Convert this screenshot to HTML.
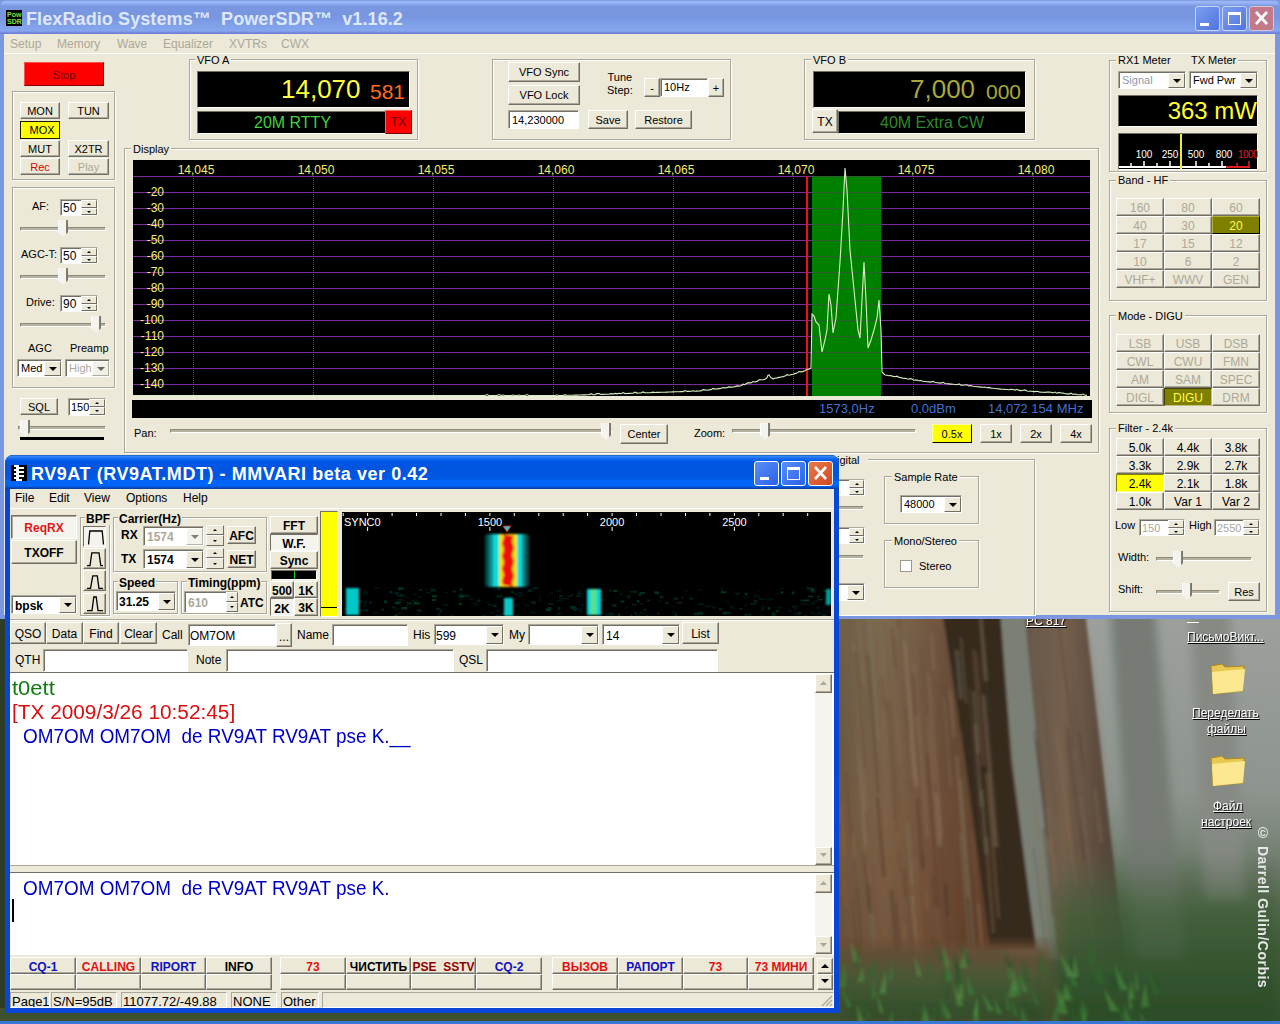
<!DOCTYPE html>
<html><head><meta charset="utf-8">
<style>
*{box-sizing:border-box;margin:0;padding:0}
html,body{width:1280px;height:1024px;overflow:hidden}
body{position:relative;font-family:"Liberation Sans",sans-serif;font-size:12px;color:#000;background:#5a5a48}
.a{position:absolute}
.t{position:absolute;white-space:nowrap;line-height:1}
.btn{position:absolute;background:#ECE9D8;border:1px solid;border-color:#fff #716F64 #716F64 #fff;box-shadow:inset -1px -1px 0 #ACA899;text-align:center;white-space:nowrap;line-height:1}
.grp{position:absolute;border:1px solid #ACA899;box-shadow:inset 1px 1px 0 #fff,1px 1px 0 #fff}
.gl{position:absolute;background:#ECE9D8;padding:0 2px;white-space:nowrap;line-height:1}
.tb{position:absolute;background:#fff;border:1px solid;border-color:#ACA899 #fff #fff #ACA899;box-shadow:inset 1px 1px 0 #716F64;white-space:nowrap;line-height:1;overflow:hidden}
.blk{position:absolute;background:#000}
.dd{position:absolute;background:#ECE9D8;border:1px solid;border-color:#fff #716F64 #716F64 #fff}
.dd:after{content:"";position:absolute;left:50%;top:50%;margin-left:-4px;margin-top:-2px;border-left:4px solid transparent;border-right:4px solid transparent;border-top:4px solid #000}
.sp{position:absolute;background:#ECE9D8;border:1px solid;border-color:#fff #716F64 #716F64 #fff}
.sp:after{content:"";position:absolute;left:50%;top:50%;margin-left:-2px;margin-top:-1px;border-left:2px solid transparent;border-right:2px solid transparent;border-bottom:2px solid #000}
.sp.d:after{border-bottom:0;border-top:2px solid #000}
.sld{position:absolute;height:4px;border:1px solid;border-color:#8f8c7c #fff #fff #8f8c7c;background:#b5b2a2}
.thumb{position:absolute;width:10px;height:17px;background:linear-gradient(90deg,#fff 0,#fff 1px,#f4f3ee 1px,#f4f3ee 8px,#8a8778 8px,#716F64 10px);clip-path:polygon(0 0,100% 0,100% 72%,50% 100%,0 72%)}
</style></head><body>

<!-- desktop background -->
<div id="desk" class="a" style="left:0;top:0;width:1280px;height:1024px;background:#808478">
<svg class="a" style="left:0;top:0" width="1280" height="1024">
<defs>
<filter id="fb" x="-10%" y="-10%" width="120%" height="120%"><feGaussianBlur stdDeviation="8"/></filter>
<filter id="fb2" x="-10%" y="-10%" width="120%" height="120%"><feGaussianBlur stdDeviation="5"/></filter>
<filter id="fb3" x="-10%" y="-10%" width="120%" height="120%"><feGaussianBlur stdDeviation="1.5"/></filter>
<linearGradient id="fog" x1="0" y1="0" x2="0" y2="1"><stop offset="0" stop-color="#9ea29e"/><stop offset="0.45" stop-color="#8e948e"/><stop offset="0.6" stop-color="#768274"/><stop offset="0.8" stop-color="#4a6044"/><stop offset="1" stop-color="#34502e"/></linearGradient>
<linearGradient id="tr1" x1="0" y1="0" x2="1" y2="0"><stop offset="0" stop-color="#6e5e48"/><stop offset="0.25" stop-color="#7e6a50"/><stop offset="0.5" stop-color="#725640"/><stop offset="0.7" stop-color="#604632"/><stop offset="1" stop-color="#46382a"/></linearGradient>
<linearGradient id="tr1v" x1="0" y1="0" x2="0" y2="1"><stop offset="0" stop-color="#000" stop-opacity="0"/><stop offset="0.6" stop-color="#6a2a10" stop-opacity="0.15"/><stop offset="1" stop-color="#5a2a10" stop-opacity="0.3"/></linearGradient>
<linearGradient id="tr2" x1="0" y1="0" x2="1" y2="0"><stop offset="0" stop-color="#66584a"/><stop offset="0.4" stop-color="#745e4c"/><stop offset="1" stop-color="#4a3e34"/></linearGradient>
<linearGradient id="veg" x1="0" y1="0" x2="0" y2="1"><stop offset="0" stop-color="#50604a" stop-opacity="0"/><stop offset="0.35" stop-color="#3e5e36" stop-opacity="0.75"/><stop offset="1" stop-color="#2a4a26"/></linearGradient>
</defs>
<rect x="0" y="600" width="1280" height="424" fill="url(#fog)"/>
<g filter="url(#fb2)">
<path d="M1110 610 L1155 610 L1185 960 L1135 960Z" fill="#767c74"/>
<path d="M1190 610 L1230 610 L1245 900 L1205 900Z" fill="#868a84"/>
</g>
<g filter="url(#fb3)">
<path d="M990 610 L1035 610 L1065 960 L1000 960Z" fill="#7a8076"/>
<path d="M1024 610 L1085 610 L1125 960 L1058 960Z" fill="url(#tr2)"/>
<path d="M835 610 L1000 610 L1012 760 L1036 950 L835 950Z" fill="url(#tr1)"/>
<path d="M835 610 L1000 610 L1012 760 L1036 950 L835 950Z" fill="url(#tr1v)"/>
<path d="M942 610 L1000 610 L1010 760 L1036 945 L990 945 L965 760Z" fill="#34291f"/>
<path d="M904 897 L907 897 L916 1006 L913 1006Z" fill="#7a7a5e" opacity="0.4"/><path d="M964 860 L965 860 L974 971 L973 971Z" fill="#4a3226" opacity="0.4"/><path d="M852 643 L854 643 L867 810 L865 810Z" fill="#9a8468" opacity="0.4"/><path d="M926 753 L928 753 L940 909 L938 909Z" fill="#4a3226" opacity="0.4"/><path d="M930 634 L933 634 L936 670 L932 670Z" fill="#8a7458" opacity="0.4"/><path d="M926 715 L929 715 L940 845 L937 845Z" fill="#8a7458" opacity="0.4"/><path d="M914 767 L917 767 L929 910 L926 910Z" fill="#8a6a48" opacity="0.4"/><path d="M934 783 L936 783 L952 972 L949 972Z" fill="#5a4030" opacity="0.4"/><path d="M942 685 L944 685 L950 764 L948 764Z" fill="#5a4030" opacity="0.4"/><path d="M921 648 L922 648 L928 727 L927 727Z" fill="#5a4030" opacity="0.4"/><path d="M979 615 L982 615 L988 681 L984 681Z" fill="#9a8468" opacity="0.4"/><path d="M907 736 L911 736 L914 779 L910 779Z" fill="#8a7458" opacity="0.4"/><path d="M952 642 L954 642 L961 728 L959 728Z" fill="#3e3024" opacity="0.4"/><path d="M949 690 L951 690 L955 737 L953 737Z" fill="#9a8468" opacity="0.4"/><path d="M906 823 L909 823 L914 885 L911 885Z" fill="#7a7a5e" opacity="0.4"/><path d="M866 655 L869 655 L880 794 L877 794Z" fill="#5a4030" opacity="0.4"/><path d="M896 615 L900 615 L914 792 L910 792Z" fill="#6a4a34" opacity="0.4"/><path d="M985 672 L986 672 L1002 871 L1001 871Z" fill="#5a4030" opacity="0.4"/><path d="M844 750 L846 750 L848 781 L847 781Z" fill="#7a5440" opacity="0.4"/><path d="M960 638 L962 638 L967 703 L965 703Z" fill="#8a7458" opacity="0.4"/><path d="M840 805 L842 805 L847 856 L844 856Z" fill="#8a6a48" opacity="0.4"/><path d="M960 733 L962 733 L973 869 L971 869Z" fill="#6a4a34" opacity="0.4"/><path d="M972 691 L975 691 L980 753 L977 753Z" fill="#7a7a5e" opacity="0.4"/><path d="M867 884 L871 884 L881 1017 L878 1017Z" fill="#3e3024" opacity="0.4"/><path d="M845 771 L846 771 L852 845 L851 845Z" fill="#3e3024" opacity="0.4"/><path d="M876 797 L879 797 L886 877 L882 877Z" fill="#4a3226" opacity="0.4"/><path d="M975 654 L979 654 L987 765 L984 765Z" fill="#5a4030" opacity="0.4"/><path d="M879 677 L883 677 L886 710 L882 710Z" fill="#6a4a34" opacity="0.4"/><path d="M898 629 L900 629 L906 707 L905 707Z" fill="#7a7a5e" opacity="0.4"/><path d="M922 725 L924 725 L938 907 L937 907Z" fill="#7a5440" opacity="0.4"/><path d="M935 793 L938 793 L942 847 L939 847Z" fill="#9a8468" opacity="0.4"/><path d="M974 724 L976 724 L983 807 L980 807Z" fill="#9a8468" opacity="0.4"/><path d="M841 762 L844 762 L856 916 L853 916Z" fill="#7a5440" opacity="0.4"/><path d="M858 753 L859 753 L867 846 L865 846Z" fill="#9a8468" opacity="0.4"/><path d="M970 830 L974 830 L987 994 L984 994Z" fill="#7a5440" opacity="0.4"/><path d="M890 890 L893 890 L907 1068 L904 1068Z" fill="#3e3024" opacity="0.4"/><path d="M977 767 L978 767 L980 800 L979 800Z" fill="#3e3024" opacity="0.4"/><path d="M894 637 L895 637 L898 682 L897 682Z" fill="#5a4030" opacity="0.4"/><path d="M984 837 L988 837 L995 933 L992 933Z" fill="#8a6a48" opacity="0.4"/><path d="M903 641 L906 641 L919 798 L915 798Z" fill="#9a8468" opacity="0.4"/><path d="M884 622 L885 622 L900 815 L899 815Z" fill="#5a4030" opacity="0.4"/><path d="M911 896 L914 896 L920 969 L917 969Z" fill="#9a8468" opacity="0.4"/><path d="M892 802 L894 802 L903 920 L902 920Z" fill="#7a5440" opacity="0.4"/><path d="M935 887 L937 887 L944 973 L942 973Z" fill="#6a4a34" opacity="0.4"/><path d="M867 861 L869 861 L884 1046 L882 1046Z" fill="#8a7458" opacity="0.4"/><path d="M895 712 L897 712 L902 765 L899 765Z" fill="#8a6a48" opacity="0.4"/><path d="M890 627 L893 627 L897 668 L893 668Z" fill="#6a4a34" opacity="0.4"/><path d="M959 759 L960 759 L975 946 L974 946Z" fill="#3e3024" opacity="0.4"/><path d="M894 820 L897 820 L909 972 L906 972Z" fill="#8a6a48" opacity="0.4"/><path d="M885 700 L889 700 L899 833 L896 833Z" fill="#6a4a34" opacity="0.4"/><path d="M922 856 L924 856 L926 890 L925 890Z" fill="#4a3226" opacity="0.4"/><path d="M898 850 L899 850 L905 925 L904 925Z" fill="#4a3226" opacity="0.4"/><path d="M955 650 L959 650 L963 699 L959 699Z" fill="#7a7a5e" opacity="0.4"/><path d="M934 907 L938 907 L949 1054 L946 1054Z" fill="#8a7458" opacity="0.4"/><path d="M959 833 L961 833 L974 991 L972 991Z" fill="#7a7a5e" opacity="0.4"/><path d="M943 698 L945 698 L952 787 L950 787Z" fill="#7a7a5e" opacity="0.4"/><path d="M912 664 L916 664 L929 838 L926 838Z" fill="#8a7458" opacity="0.4"/><path d="M851 835 L855 835 L859 887 L855 887Z" fill="#8a6a48" opacity="0.4"/><path d="M867 617 L871 617 L880 741 L877 741Z" fill="#7a7a5e" opacity="0.4"/><path d="M955 756 L959 756 L970 897 L966 897Z" fill="#8a7458" opacity="0.4"/><path d="M853 858 L856 858 L871 1046 L868 1046Z" fill="#5a4030" opacity="0.4"/><path d="M869 914 L873 914 L889 1110 L885 1110Z" fill="#7a7a5e" opacity="0.4"/><path d="M982 695 L985 695 L998 847 L994 847Z" fill="#9a8468" opacity="0.4"/><path d="M889 749 L890 749 L900 873 L899 873Z" fill="#6a4a34" opacity="0.4"/><path d="M910 862 L911 862 L914 903 L913 903Z" fill="#9a8468" opacity="0.4"/><path d="M863 855 L865 855 L870 909 L868 909Z" fill="#4a3226" opacity="0.4"/><path d="M985 773 L989 773 L1000 918 L997 918Z" fill="#8a6a48" opacity="0.4"/><path d="M977 904 L980 904 L983 949 L981 949Z" fill="#8a7458" opacity="0.4"/><path d="M903 869 L905 869 L915 994 L913 994Z" fill="#4a3226" opacity="0.4"/><path d="M915 786 L918 786 L925 869 L921 869Z" fill="#3e3024" opacity="0.4"/><path d="M978 801 L982 801 L989 883 L985 883Z" fill="#4a3226" opacity="0.4"/><path d="M980 790 L983 790 L988 854 L985 854Z" fill="#7a7a5e" opacity="0.4"/><path d="M855 730 L856 730 L866 852 L865 852Z" fill="#9a8468" opacity="0.4"/><path d="M914 859 L916 859 L926 985 L924 985Z" fill="#8a6a48" opacity="0.4"/><path d="M852 899 L853 899 L862 1007 L860 1007Z" fill="#3e3024" opacity="0.4"/><path d="M878 654 L880 654 L888 757 L886 757Z" fill="#8a6a48" opacity="0.4"/><path d="M915 743 L916 743 L919 778 L918 778Z" fill="#6a4a34" opacity="0.4"/><path d="M857 622 L860 622 L865 685 L862 685Z" fill="#8a7458" opacity="0.4"/><path d="M840 836 L842 836 L847 907 L845 907Z" fill="#8a6a48" opacity="0.4"/><path d="M853 652 L857 652 L866 769 L863 769Z" fill="#6a4a34" opacity="0.4"/><path d="M944 883 L947 883 L949 917 L946 917Z" fill="#3e3024" opacity="0.4"/><path d="M959 779 L962 779 L976 956 L973 956Z" fill="#7a7a5e" opacity="0.4"/><path d="M932 875 L934 875 L945 1009 L943 1009Z" fill="#4a3226" opacity="0.4"/><path d="M872 862 L875 862 L890 1046 L887 1046Z" fill="#7a5440" opacity="0.4"/><path d="M927 674 L930 674 L943 837 L940 837Z" fill="#8a7458" opacity="0.4"/><path d="M968 688 L970 688 L982 842 L981 842Z" fill="#6a4a34" opacity="0.4"/><path d="M895 902 L897 902 L907 1024 L905 1024Z" fill="#4a3226" opacity="0.4"/><path d="M867 859 L870 859 L874 905 L871 905Z" fill="#7a5440" opacity="0.4"/><path d="M972 650 L976 650 L985 766 L981 766Z" fill="#7a5440" opacity="0.4"/><path d="M912 673 L915 673 L918 715 L915 715Z" fill="#5a4030" opacity="0.4"/><path d="M1032 792 L1034 792 L1052 940 L1049 940Z" fill="#8a6e52" opacity="0.4"/><path d="M1040 677 L1041 677 L1058 818 L1056 818Z" fill="#5e4a3c" opacity="0.4"/><path d="M1090 637 L1091 637 L1110 792 L1109 792Z" fill="#8a6e52" opacity="0.4"/><path d="M1035 729 L1036 729 L1047 821 L1046 821Z" fill="#5e4a3c" opacity="0.4"/><path d="M1058 624 L1060 624 L1075 748 L1073 748Z" fill="#4a3a2e" opacity="0.4"/><path d="M1042 827 L1044 827 L1054 916 L1052 916Z" fill="#4a3a2e" opacity="0.4"/><path d="M1069 842 L1071 842 L1080 921 L1079 921Z" fill="#7a5e48" opacity="0.4"/><path d="M1082 861 L1085 861 L1098 977 L1096 977Z" fill="#8a6e52" opacity="0.4"/><path d="M1067 784 L1068 784 L1078 865 L1077 865Z" fill="#5e4a3c" opacity="0.4"/><path d="M1048 828 L1049 828 L1057 887 L1055 887Z" fill="#8a6e52" opacity="0.4"/><path d="M1039 771 L1040 771 L1050 855 L1049 855Z" fill="#8a6e52" opacity="0.4"/><path d="M1080 822 L1082 822 L1087 871 L1086 871Z" fill="#5e4a3c" opacity="0.4"/><path d="M1050 869 L1051 869 L1070 1028 L1069 1028Z" fill="#7a5e48" opacity="0.4"/><path d="M1045 807 L1048 807 L1058 887 L1055 887Z" fill="#8a6e52" opacity="0.4"/><path d="M1067 729 L1069 729 L1088 889 L1086 889Z" fill="#4a3a2e" opacity="0.4"/><path d="M1076 894 L1078 894 L1083 937 L1081 937Z" fill="#7a5e48" opacity="0.4"/><path d="M1078 732 L1080 732 L1085 778 L1084 778Z" fill="#4a3a2e" opacity="0.4"/><path d="M1072 692 L1073 692 L1082 765 L1081 765Z" fill="#5e4a3c" opacity="0.4"/><path d="M1066 891 L1068 891 L1081 999 L1079 999Z" fill="#7a5e48" opacity="0.4"/><path d="M1071 641 L1074 641 L1087 753 L1085 753Z" fill="#7a5e48" opacity="0.4"/><path d="M1055 728 L1058 728 L1077 884 L1074 884Z" fill="#8a6e52" opacity="0.4"/><path d="M1065 740 L1067 740 L1079 840 L1077 840Z" fill="#5e4a3c" opacity="0.4"/><path d="M1064 722 L1066 722 L1075 797 L1073 797Z" fill="#5e4a3c" opacity="0.4"/><path d="M1066 821 L1068 821 L1077 896 L1076 896Z" fill="#7a5e48" opacity="0.4"/><path d="M1080 797 L1082 797 L1093 886 L1091 886Z" fill="#8a6e52" opacity="0.4"/><path d="M1033 731 L1035 731 L1048 841 L1047 841Z" fill="#5e4a3c" opacity="0.4"/><path d="M1035 740 L1038 740 L1049 838 L1046 838Z" fill="#4a3a2e" opacity="0.4"/><path d="M1033 847 L1034 847 L1052 996 L1051 996Z" fill="#4a3a2e" opacity="0.4"/><path d="M1094 789 L1096 789 L1103 843 L1100 843Z" fill="#8a6e52" opacity="0.4"/><path d="M1060 635 L1061 635 L1073 738 L1072 738Z" fill="#7a5e48" opacity="0.4"/>
</g>
<path d="M835 945 L1050 945 L1070 1024 L835 1024Z" fill="#6a4a32" filter="url(#fb)"/>
<rect x="835" y="948" width="220" height="76" fill="url(#veg)" filter="url(#fb)"/>
<rect x="1055" y="850" width="225" height="174" fill="url(#veg)" filter="url(#fb)"/>
<g filter="url(#fb3)"><path d="M955 970 L954 951 L961 970Z" fill="#1e4a1e" opacity="0.5"/><path d="M973 1015 L978 998 L978 1015Z" fill="#5aa048" opacity="0.5"/><path d="M879 994 L886 970 L886 994Z" fill="#5aa048" opacity="0.5"/><path d="M954 979 L957 956 L958 979Z" fill="#2e5a2a" opacity="0.5"/><path d="M928 977 L928 954 L932 977Z" fill="#2a6a2a" opacity="0.5"/><path d="M1058 1005 L1054 984 L1065 1005Z" fill="#3a8a3a" opacity="0.5"/><path d="M871 998 L875 973 L875 998Z" fill="#3a8a3a" opacity="0.5"/><path d="M914 1030 L913 1012 L919 1030Z" fill="#1e4a1e" opacity="0.5"/><path d="M1078 1020 L1083 999 L1086 1020Z" fill="#3a8a3a" opacity="0.5"/><path d="M1108 1015 L1107 996 L1116 1015Z" fill="#1e4a1e" opacity="0.5"/><path d="M957 1006 L954 985 L964 1006Z" fill="#5aa048" opacity="0.5"/><path d="M1135 990 L1136 970 L1139 990Z" fill="#4a9a40" opacity="0.5"/><path d="M1013 991 L1013 968 L1018 991Z" fill="#5aa048" opacity="0.5"/><path d="M1088 965 L1094 943 L1095 965Z" fill="#2a6a2a" opacity="0.5"/><path d="M997 1014 L994 997 L1002 1014Z" fill="#4a9a40" opacity="0.5"/><path d="M1072 986 L1069 966 L1078 986Z" fill="#3a8a3a" opacity="0.5"/><path d="M1129 1009 L1128 985 L1133 1009Z" fill="#4a9a40" opacity="0.5"/><path d="M940 988 L947 970 L945 988Z" fill="#2e5a2a" opacity="0.5"/><path d="M956 986 L957 962 L963 986Z" fill="#1e4a1e" opacity="0.5"/><path d="M957 988 L962 966 L961 988Z" fill="#2a6a2a" opacity="0.5"/><path d="M1082 1023 L1087 1004 L1086 1023Z" fill="#4a9a40" opacity="0.5"/><path d="M889 981 L892 957 L892 981Z" fill="#3a8a3a" opacity="0.5"/><path d="M1014 1016 L1011 997 L1018 1016Z" fill="#3a8a3a" opacity="0.5"/><path d="M939 962 L933 938 L946 962Z" fill="#2e5a2a" opacity="0.5"/><path d="M917 976 L914 955 L922 976Z" fill="#5aa048" opacity="0.5"/><path d="M1098 984 L1098 962 L1105 984Z" fill="#2a6a2a" opacity="0.5"/><path d="M1066 1025 L1070 999 L1071 1025Z" fill="#1e4a1e" opacity="0.5"/><path d="M839 987 L845 961 L846 987Z" fill="#3a8a3a" opacity="0.5"/><path d="M1007 1010 L1005 990 L1011 1010Z" fill="#3a8a3a" opacity="0.5"/><path d="M1077 1030 L1080 1011 L1082 1030Z" fill="#1e4a1e" opacity="0.5"/><path d="M1008 979 L1008 956 L1013 979Z" fill="#3a8a3a" opacity="0.5"/><path d="M888 1025 L892 1009 L894 1025Z" fill="#3a8a3a" opacity="0.5"/><path d="M1096 982 L1091 964 L1100 982Z" fill="#2a6a2a" opacity="0.5"/><path d="M1069 1002 L1068 977 L1074 1002Z" fill="#2a6a2a" opacity="0.5"/><path d="M1131 1027 L1132 1002 L1137 1027Z" fill="#2e5a2a" opacity="0.5"/><path d="M922 1023 L924 999 L925 1023Z" fill="#4a9a40" opacity="0.5"/><path d="M1116 988 L1123 964 L1121 988Z" fill="#2a6a2a" opacity="0.5"/><path d="M1008 997 L1012 980 L1016 997Z" fill="#4a9a40" opacity="0.5"/><path d="M1125 1022 L1124 1004 L1131 1022Z" fill="#4a9a40" opacity="0.5"/><path d="M1120 990 L1114 964 L1128 990Z" fill="#4a9a40" opacity="0.5"/><path d="M880 1013 L876 991 L884 1013Z" fill="#5aa048" opacity="0.5"/><path d="M1086 960 L1091 943 L1091 960Z" fill="#2a6a2a" opacity="0.5"/><path d="M1069 967 L1072 950 L1076 967Z" fill="#1e4a1e" opacity="0.5"/><path d="M1013 996 L1018 976 L1021 996Z" fill="#3a8a3a" opacity="0.5"/><path d="M867 1019 L860 999 L873 1019Z" fill="#2a6a2a" opacity="0.5"/><path d="M1143 1028 L1140 1012 L1148 1028Z" fill="#4a9a40" opacity="0.5"/><path d="M988 1011 L982 993 L995 1011Z" fill="#4a9a40" opacity="0.5"/><path d="M1056 1013 L1058 997 L1061 1013Z" fill="#3a8a3a" opacity="0.5"/><path d="M1067 977 L1060 953 L1075 977Z" fill="#5aa048" opacity="0.5"/><path d="M1110 1011 L1104 989 L1119 1011Z" fill="#5aa048" opacity="0.5"/><path d="M1079 1028 L1080 1011 L1084 1028Z" fill="#1e4a1e" opacity="0.5"/><path d="M959 968 L966 946 L967 968Z" fill="#4a9a40" opacity="0.5"/><path d="M945 1019 L938 996 L949 1019Z" fill="#3a8a3a" opacity="0.5"/><path d="M1041 973 L1039 948 L1048 973Z" fill="#2a6a2a" opacity="0.5"/><path d="M867 976 L875 956 L875 976Z" fill="#2a6a2a" opacity="0.5"/><path d="M948 1018 L942 1000 L952 1018Z" fill="#5aa048" opacity="0.5"/><path d="M1061 994 L1063 971 L1067 994Z" fill="#1e4a1e" opacity="0.5"/><path d="M940 1016 L943 994 L943 1016Z" fill="#2a6a2a" opacity="0.5"/><path d="M945 984 L944 963 L949 984Z" fill="#2e5a2a" opacity="0.5"/><path d="M945 981 L947 963 L953 981Z" fill="#3a8a3a" opacity="0.5"/><path d="M1129 999 L1131 978 L1135 999Z" fill="#4a9a40" opacity="0.5"/><path d="M902 1026 L905 1001 L908 1026Z" fill="#2e5a2a" opacity="0.5"/><path d="M847 1007 L841 986 L852 1007Z" fill="#3a8a3a" opacity="0.5"/><path d="M945 967 L942 942 L951 967Z" fill="#4a9a40" opacity="0.5"/><path d="M1073 977 L1074 955 L1079 977Z" fill="#5aa048" opacity="0.5"/><path d="M923 1025 L925 1007 L931 1025Z" fill="#4a9a40" opacity="0.5"/><path d="M931 1024 L935 1004 L935 1024Z" fill="#2a6a2a" opacity="0.5"/><path d="M1030 1018 L1023 1000 L1039 1018Z" fill="#1e4a1e" opacity="0.5"/><path d="M1141 1007 L1145 982 L1149 1007Z" fill="#4a9a40" opacity="0.5"/><path d="M1036 1005 L1031 985 L1039 1005Z" fill="#3a8a3a" opacity="0.5"/><path d="M1008 968 L1003 947 L1013 968Z" fill="#1e4a1e" opacity="0.5"/><path d="M1021 984 L1025 960 L1029 984Z" fill="#2e5a2a" opacity="0.5"/><path d="M968 995 L967 975 L975 995Z" fill="#3a8a3a" opacity="0.5"/><path d="M1060 1014 L1060 988 L1068 1014Z" fill="#4a9a40" opacity="0.5"/><path d="M1113 989 L1107 972 L1122 989Z" fill="#1e4a1e" opacity="0.5"/><path d="M944 997 L951 978 L948 997Z" fill="#1e4a1e" opacity="0.5"/><path d="M1072 1024 L1070 1005 L1079 1024Z" fill="#2e5a2a" opacity="0.5"/><path d="M1122 1022 L1116 1002 L1128 1022Z" fill="#2a6a2a" opacity="0.5"/><path d="M966 964 L959 939 L972 964Z" fill="#2e5a2a" opacity="0.5"/><path d="M1050 1027 L1057 1003 L1058 1027Z" fill="#3a8a3a" opacity="0.5"/><path d="M957 999 L962 981 L964 999Z" fill="#5aa048" opacity="0.5"/><path d="M1021 1024 L1021 1007 L1029 1024Z" fill="#3a8a3a" opacity="0.5"/><path d="M1023 992 L1019 973 L1028 992Z" fill="#4a9a40" opacity="0.5"/><path d="M858 1024 L857 1004 L865 1024Z" fill="#5aa048" opacity="0.5"/><path d="M853 962 L850 941 L861 962Z" fill="#4a9a40" opacity="0.5"/><path d="M1153 994 L1148 969 L1160 994Z" fill="#2a6a2a" opacity="0.5"/><path d="M857 982 L863 966 L864 982Z" fill="#4a9a40" opacity="0.5"/><path d="M1063 1000 L1065 982 L1071 1000Z" fill="#5aa048" opacity="0.5"/><path d="M854 968 L859 942 L859 968Z" fill="#2e5a2a" opacity="0.5"/><path d="M973 1022 L976 997 L979 1022Z" fill="#4a9a40" opacity="0.5"/></g>
<rect x="0" y="600" width="8" height="424" fill="#2e3e26"/>
<rect x="0" y="1008" width="840" height="16" fill="#3e502e"/>
<rect x="0" y="1021" width="1280" height="3" fill="#3a78d8"/>
</svg>
<!-- icons -->
<div class="t" style="left:1026px;top:615px;font-size:12px;color:#fff;text-decoration:underline;text-shadow:1px 1px 1px #000">PC 817</div>
<div class="a" style="left:1187px;top:622px;width:12px;height:1px;background:#fff"></div>
<div class="t" style="left:1187px;top:631px;font-size:12px;color:#fff;text-decoration:underline;text-shadow:1px 1px 1px #000">ПисьмоВикт...</div>
<svg class="a" style="left:1208px;top:658px" width="40" height="40"><path d="M3 8 L14 6 L17 9 L36 8 L35 33 L5 36Z" fill="#e8c850" stroke="#b08820" stroke-width="1"/><path d="M4 14 L37 11 L35 33 L5 36Z" fill="#fce890"/></svg>
<div class="t" style="left:1192px;top:707px;font-size:12px;color:#fff;text-decoration:underline;text-shadow:1px 1px 1px #000">Переделать</div>
<div class="t" style="left:1207px;top:723px;font-size:12px;color:#fff;text-decoration:underline;text-shadow:1px 1px 1px #000">файлы</div>
<svg class="a" style="left:1208px;top:750px" width="40" height="40"><path d="M3 8 L14 6 L17 9 L36 8 L35 33 L5 36Z" fill="#e8c850" stroke="#b08820" stroke-width="1"/><path d="M4 14 L37 11 L35 33 L5 36Z" fill="#fce890"/></svg>
<div class="t" style="left:1213px;top:800px;font-size:12px;color:#fff;text-decoration:underline;text-shadow:1px 1px 1px #000">Файл</div>
<div class="t" style="left:1201px;top:816px;font-size:12px;color:#fff;text-decoration:underline;text-shadow:1px 1px 1px #000">настроек</div>
<div class="t" style="left:1256px;top:825px;font-size:14px;font-weight:bold;color:#e8e8e8;writing-mode:vertical-rl;letter-spacing:0.5px">© Darrell Gulin/Corbis</div>
</div>

<!-- POWERSDR WINDOW -->
<div id="psdr" class="a" style="left:0;top:0;width:1280px;height:619px;background:#7b97e0">
  <!-- title bar -->
  <div class="a" style="left:0;top:0;width:1280px;height:34px;background:linear-gradient(#6a88d0 0,#9ab6f8 1px,#98b4f6 3px,#7a98e0 6px,#7896e0 17px,#80a0ea 25px,#86a6ee 31px,#7080d8 33px,#7080d8 34px);border-radius:7px 7px 0 0"></div>
  <div class="a" style="left:6px;top:10px;width:16px;height:16px;background:#000"></div>
  <div class="t" style="left:7px;top:11px;font-size:7px;color:#7ee03a;font-weight:bold;line-height:7px">Pow<br>SDR</div>
  <div class="t" style="left:26px;top:10px;font-size:18px;font-weight:bold;color:#dfe8fa;letter-spacing:0.1px">FlexRadio Systems™&nbsp; PowerSDR™&nbsp; v1.16.2</div>
  <!-- title buttons -->
  <div class="a" style="left:1195px;top:6px;width:25px;height:25px;border:1px solid #c7d5f6;border-radius:3px;background:linear-gradient(135deg,#7d9ef0,#4f74e0)"></div>
  <div class="a" style="left:1200px;top:23px;width:9px;height:3px;background:#fff"></div>
  <div class="a" style="left:1222px;top:6px;width:25px;height:25px;border:1px solid #c7d5f6;border-radius:3px;background:linear-gradient(135deg,#7d9ef0,#4f74e0)"></div>
  <div class="a" style="left:1228px;top:12px;width:13px;height:13px;border:1px solid #fff;border-top-width:3px"></div>
  <div class="a" style="left:1249px;top:6px;width:25px;height:25px;border:1px solid #d9c3d0;border-radius:3px;background:#c27a8a"></div>
  <svg class="a" style="left:1249px;top:6px" width="25" height="25"><path d="M7 6L18 18M18 6L7 18" stroke="#fff" stroke-width="2.6"/></svg>
  <!-- client -->
  <div class="a" id="pclient" style="left:4px;top:34px;width:1271px;height:581px;background:#ECE9D8"></div>
  <!-- menu -->
  <div class="a" style="left:4px;top:53px;width:1271px;height:1px;background:#fff"></div>
  <div class="t" style="left:10px;top:38px;font-size:12px;color:#aca899">Setup</div>
  <div class="t" style="left:57px;top:38px;font-size:12px;color:#aca899">Memory</div>
  <div class="t" style="left:117px;top:38px;font-size:12px;color:#aca899">Wave</div>
  <div class="t" style="left:163px;top:38px;font-size:12px;color:#aca899">Equalizer</div>
  <div class="t" style="left:229px;top:38px;font-size:12px;color:#aca899">XVTRs</div>
  <div class="t" style="left:281px;top:38px;font-size:12px;color:#aca899">CWX</div>

  <!-- left panel -->
  <div class="a" style="left:24px;top:62px;width:80px;height:24px;background:#f00;border:1px solid #8a0000;border-color:#ff5050 #800 #800 #ff5050"></div>
  <div class="t" style="left:24px;top:70px;width:80px;text-align:center;font-size:11px;color:#700">Stop</div>

  <div class="grp" style="left:12px;top:91px;width:103px;height:89px"></div>
  <div class="btn" style="left:20px;top:102px;width:40px;height:17px;padding-top:3px;font-size:11px">MON</div>
  <div class="btn" style="left:68px;top:102px;width:41px;height:17px;padding-top:3px;font-size:11px">TUN</div>
  <div class="a" style="left:20px;top:121px;width:40px;height:18px;background:#ff0;border:1px solid #1a1a00;padding:3px 0 0 4px;text-align:center;font-size:11px;line-height:1">MOX</div>
  <div class="btn" style="left:20px;top:140px;width:40px;height:17px;padding-top:3px;font-size:11px">MUT</div>
  <div class="btn" style="left:68px;top:140px;width:41px;height:17px;padding-top:3px;font-size:11px">X2TR</div>
  <div class="btn" style="left:20px;top:158px;width:40px;height:17px;padding-top:3px;font-size:11px;color:#d00">Rec</div>
  <div class="btn" style="left:68px;top:158px;width:41px;height:17px;padding-top:3px;font-size:11px;color:#aca899">Play</div>

  <div class="grp" style="left:12px;top:187px;width:103px;height:201px"></div>
  <div class="t" style="left:32px;top:201px;font-size:11px">AF:</div>
  <div class="tb" style="left:60px;top:199px;width:38px;height:17px;padding:2px 0 0 2px;font-size:12px">50</div>
  <div class="sp" style="left:81px;top:200px;width:16px;height:8px"></div><div class="sp d" style="left:81px;top:208px;width:16px;height:7px"></div>
  <div class="sld" style="left:20px;top:227px;width:86px"></div>
  <div class="thumb" style="left:58px;top:220px"></div>

  <div class="t" style="left:21px;top:249px;font-size:11px">AGC-T:</div>
  <div class="tb" style="left:60px;top:247px;width:38px;height:17px;padding:2px 0 0 2px;font-size:12px">50</div>
  <div class="sp" style="left:81px;top:248px;width:16px;height:8px"></div><div class="sp d" style="left:81px;top:256px;width:16px;height:7px"></div>
  <div class="sld" style="left:20px;top:275px;width:86px"></div>
  <div class="thumb" style="left:58px;top:268px"></div>

  <div class="t" style="left:26px;top:297px;font-size:11px">Drive:</div>
  <div class="tb" style="left:60px;top:295px;width:38px;height:17px;padding:2px 0 0 2px;font-size:12px">90</div>
  <div class="sp" style="left:81px;top:296px;width:16px;height:8px"></div><div class="sp d" style="left:81px;top:304px;width:16px;height:7px"></div>
  <div class="sld" style="left:20px;top:323px;width:86px"></div>
  <div class="thumb" style="left:91px;top:316px"></div>

  <div class="t" style="left:28px;top:343px;font-size:11px">AGC</div>
  <div class="t" style="left:70px;top:343px;font-size:11px">Preamp</div>
  <div class="tb" style="left:17px;top:359px;width:45px;height:18px;padding:3px 0 0 3px;font-size:11px">Med</div>
  <div class="dd" style="left:44px;top:361px;width:17px;height:15px"></div>
  <div class="tb" style="left:65px;top:359px;width:45px;height:18px;padding:3px 0 0 3px;font-size:11px;color:#aca899">High</div>
  <div class="dd" style="left:92px;top:361px;width:17px;height:15px;opacity:.6"></div>

  <div class="btn" style="left:20px;top:398px;width:38px;height:17px;padding-top:3px;font-size:11px">SQL</div>
  <div class="tb" style="left:68px;top:398px;width:38px;height:18px;padding:3px 0 0 2px;font-size:11px">150</div>
  <div class="sp" style="left:89px;top:399px;width:16px;height:8px"></div><div class="sp d" style="left:89px;top:407px;width:16px;height:8px"></div>
  <div class="sld" style="left:18px;top:426px;width:88px"></div>
  <div class="thumb" style="left:20px;top:420px"></div>
  <div class="a" style="left:20px;top:437px;width:84px;height:3px;background:#000"></div>

  <!-- VFO A -->
  <div class="grp" style="left:189px;top:59px;width:229px;height:81px"></div>
  <div class="gl" style="left:195px;top:55px;font-size:11px">VFO A</div>
  <div class="blk" style="left:197px;top:71px;width:213px;height:37px;border:1px solid;border-color:#716F64 #fff #fff #716F64"></div>
  <div class="t" style="left:281px;top:76px;font-size:26px;color:#ffff40">14,070</div>
  <div class="t" style="left:370px;top:81px;font-size:21px;color:#ff6a20">581</div>
  <div class="blk" style="left:197px;top:111px;width:213px;height:23px;border:1px solid;border-color:#716F64 #fff #fff #716F64"></div>
  <div class="t" style="left:254px;top:115px;font-size:16px;color:#40d040">20M RTTY</div>
  <div class="a" style="left:385px;top:110px;width:27px;height:24px;background:#f00;border:1px solid;border-color:#ff6060 #700 #700 #ff6060"></div>
  <div class="t" style="left:385px;top:116px;width:27px;text-align:center;font-size:12px;color:#600">TX</div>

  <!-- VFO sync group -->
  <div class="grp" style="left:492px;top:59px;width:239px;height:81px"></div>
  <div class="btn" style="left:508px;top:62px;width:72px;height:20px;padding-top:4px;font-size:11px">VFO Sync</div>
  <div class="btn" style="left:508px;top:85px;width:72px;height:20px;padding-top:4px;font-size:11px">VFO Lock</div>
  <div class="tb" style="left:508px;top:110px;width:71px;height:19px;padding:4px 0 0 3px;font-size:11px">14,230000</div>
  <div class="btn" style="left:588px;top:110px;width:40px;height:19px;padding-top:4px;font-size:11px">Save</div>
  <div class="btn" style="left:635px;top:110px;width:57px;height:19px;padding-top:4px;font-size:11px">Restore</div>
  <div class="t" style="left:607px;top:71px;font-size:11px;text-align:center;line-height:13px">Tune<br>Step:</div>
  <div class="btn" style="left:644px;top:78px;width:16px;height:19px;padding-top:4px;font-size:11px">-</div>
  <div class="tb" style="left:660px;top:78px;width:48px;height:19px;padding:3px 0 0 3px;font-size:11px">10Hz</div>
  <div class="btn" style="left:708px;top:78px;width:16px;height:19px;padding-top:4px;font-size:11px">+</div>

  <!-- VFO B -->
  <div class="grp" style="left:804px;top:59px;width:231px;height:81px"></div>
  <div class="gl" style="left:811px;top:55px;font-size:11px">VFO B</div>
  <div class="blk" style="left:813px;top:71px;width:213px;height:37px;border:1px solid;border-color:#716F64 #fff #fff #716F64"></div>
  <div class="t" style="left:910px;top:76px;font-size:26px;color:#a8a838">7,000</div>
  <div class="t" style="left:986px;top:81px;font-size:21px;color:#a8a838">000</div>
  <div class="blk" style="left:838px;top:111px;width:188px;height:23px;border:1px solid;border-color:#716F64 #fff #fff #716F64"></div>
  <div class="t" style="left:880px;top:115px;font-size:16px;color:#2e8a2e">40M Extra CW</div>
  <div class="btn" style="left:812px;top:109px;width:26px;height:24px;padding-top:6px;font-size:12px">TX</div>

  <!-- Meter group -->
  <div class="grp" style="left:1109px;top:60px;width:158px;height:112px"></div>
  <div class="gl" style="left:1116px;top:55px;font-size:11px;padding-right:20px">RX1 Meter</div>
  <div class="gl" style="left:1189px;top:55px;font-size:11px">TX Meter</div>
  <div class="tb" style="left:1118px;top:71px;width:68px;height:18px;padding:3px 0 0 3px;font-size:11px;color:#8c9ab0">Signal</div>
  <div class="dd" style="left:1168px;top:73px;width:17px;height:15px"></div>
  <div class="tb" style="left:1189px;top:71px;width:69px;height:18px;padding:3px 0 0 3px;font-size:11px">Fwd Pwr</div>
  <div class="dd" style="left:1240px;top:73px;width:17px;height:15px"></div>
  <div class="blk" style="left:1118px;top:95px;width:140px;height:32px;border:1px solid;border-color:#716F64 #fff #fff #716F64"></div>
  <div class="t" style="left:1118px;top:99px;width:139px;text-align:right;font-size:24px;color:#ffff30">363 mW</div>
  <div class="blk" style="left:1118px;top:133px;width:140px;height:37px;border:1px solid;border-color:#716F64 #fff #fff #716F64"></div>
  <svg class="a" style="left:1118px;top:133px" width="140" height="37">
    <g font-family="Liberation Sans" font-size="10" fill="#fff" text-anchor="middle">
      <text x="26" y="25">100</text><text x="52" y="25">250</text><text x="78" y="25">500</text><text x="106" y="25">800</text>
      <text x="130" y="25" fill="#e02020" letter-spacing="-0.5">1000</text>
    </g>
    <path d="M1 34H108" stroke="#fff" stroke-width="2"/><path d="M108 34H132" stroke="#e02020" stroke-width="2"/>
    <path d="M13 34v-4M26 34v-6M39 34v-4M52 34v-6M78 34v-6M91 34v-4M104 34v-6" stroke="#fff" stroke-width="1.5"/>
    <path d="M119 34v-4M131 34v-6" stroke="#e02020" stroke-width="1.5"/>
    <path d="M63 1V36" stroke="#f0f020" stroke-width="2"/>
  </svg>

  <!-- Band group -->
  <div class="grp" style="left:1109px;top:180px;width:158px;height:121px"></div>
  <div class="gl" style="left:1116px;top:175px;font-size:11px">Band - HF</div>
<div class="btn" style="left:1116px;top:198px;width:48px;height:18px;padding-top:3px;font-size:12px;color:#aca899">160</div>
<div class="btn" style="left:1164px;top:198px;width:48px;height:18px;padding-top:3px;font-size:12px;color:#aca899">80</div>
<div class="btn" style="left:1212px;top:198px;width:48px;height:18px;padding-top:3px;font-size:12px;color:#aca899">60</div>
<div class="btn" style="left:1116px;top:216px;width:48px;height:18px;padding-top:3px;font-size:12px;color:#aca899">40</div>
<div class="btn" style="left:1164px;top:216px;width:48px;height:18px;padding-top:3px;font-size:12px;color:#aca899">30</div>
<div class="a" style="left:1212px;top:216px;width:48px;height:18px;background:#808000;border:1px solid;border-color:#b0b040 #000 #000 #b0b040;padding-top:3px;text-align:center;font-size:12px;line-height:1;color:#ffff40">20</div>
<div class="btn" style="left:1116px;top:234px;width:48px;height:18px;padding-top:3px;font-size:12px;color:#aca899">17</div>
<div class="btn" style="left:1164px;top:234px;width:48px;height:18px;padding-top:3px;font-size:12px;color:#aca899">15</div>
<div class="btn" style="left:1212px;top:234px;width:48px;height:18px;padding-top:3px;font-size:12px;color:#aca899">12</div>
<div class="btn" style="left:1116px;top:252px;width:48px;height:18px;padding-top:3px;font-size:12px;color:#aca899">10</div>
<div class="btn" style="left:1164px;top:252px;width:48px;height:18px;padding-top:3px;font-size:12px;color:#aca899">6</div>
<div class="btn" style="left:1212px;top:252px;width:48px;height:18px;padding-top:3px;font-size:12px;color:#aca899">2</div>
<div class="btn" style="left:1116px;top:270px;width:48px;height:18px;padding-top:3px;font-size:12px;color:#aca899">VHF+</div>
<div class="btn" style="left:1164px;top:270px;width:48px;height:18px;padding-top:3px;font-size:12px;color:#aca899">WWV</div>
<div class="btn" style="left:1212px;top:270px;width:48px;height:18px;padding-top:3px;font-size:12px;color:#aca899">GEN</div>


  <!-- Mode group -->
  <div class="grp" style="left:1109px;top:315px;width:158px;height:98px"></div>
  <div class="gl" style="left:1116px;top:311px;font-size:11px">Mode - DIGU</div>
<div class="btn" style="left:1116px;top:334px;width:48px;height:18px;padding-top:3px;font-size:12px;color:#aca899">LSB</div>
<div class="btn" style="left:1164px;top:334px;width:48px;height:18px;padding-top:3px;font-size:12px;color:#aca899">USB</div>
<div class="btn" style="left:1212px;top:334px;width:48px;height:18px;padding-top:3px;font-size:12px;color:#aca899">DSB</div>
<div class="btn" style="left:1116px;top:352px;width:48px;height:18px;padding-top:3px;font-size:12px;color:#aca899">CWL</div>
<div class="btn" style="left:1164px;top:352px;width:48px;height:18px;padding-top:3px;font-size:12px;color:#aca899">CWU</div>
<div class="btn" style="left:1212px;top:352px;width:48px;height:18px;padding-top:3px;font-size:12px;color:#aca899">FMN</div>
<div class="btn" style="left:1116px;top:370px;width:48px;height:18px;padding-top:3px;font-size:12px;color:#aca899">AM</div>
<div class="btn" style="left:1164px;top:370px;width:48px;height:18px;padding-top:3px;font-size:12px;color:#aca899">SAM</div>
<div class="btn" style="left:1212px;top:370px;width:48px;height:18px;padding-top:3px;font-size:12px;color:#aca899">SPEC</div>
<div class="btn" style="left:1116px;top:388px;width:48px;height:18px;padding-top:3px;font-size:12px;color:#aca899">DIGL</div>
<div class="a" style="left:1164px;top:388px;width:48px;height:18px;background:#808000;border:1px solid;border-color:#404000 #c0c080 #c0c080 #404000;padding-top:3px;text-align:center;font-size:12px;line-height:1;color:#ffff40">DIGU</div>
<div class="btn" style="left:1212px;top:388px;width:48px;height:18px;padding-top:3px;font-size:12px;color:#aca899">DRM</div>


  <!-- Filter group -->
  <div class="grp" style="left:1109px;top:428px;width:158px;height:184px"></div>
  <div class="gl" style="left:1116px;top:423px;font-size:11px">Filter - 2.4k</div>
<div class="btn" style="left:1116px;top:438px;width:48px;height:18px;padding-top:3px;font-size:12px;color:#000">5.0k</div>
<div class="btn" style="left:1164px;top:438px;width:48px;height:18px;padding-top:3px;font-size:12px;color:#000">4.4k</div>
<div class="btn" style="left:1212px;top:438px;width:48px;height:18px;padding-top:3px;font-size:12px;color:#000">3.8k</div>
<div class="btn" style="left:1116px;top:456px;width:48px;height:18px;padding-top:3px;font-size:12px;color:#000">3.3k</div>
<div class="btn" style="left:1164px;top:456px;width:48px;height:18px;padding-top:3px;font-size:12px;color:#000">2.9k</div>
<div class="btn" style="left:1212px;top:456px;width:48px;height:18px;padding-top:3px;font-size:12px;color:#000">2.7k</div>
<div class="a" style="left:1116px;top:474px;width:48px;height:18px;background:#ffff00;border:1px solid;border-color:#808000 #ffff80 #ffff80 #808000;padding-top:3px;text-align:center;font-size:12px;line-height:1;color:#000">2.4k</div>
<div class="btn" style="left:1164px;top:474px;width:48px;height:18px;padding-top:3px;font-size:12px;color:#000">2.1k</div>
<div class="btn" style="left:1212px;top:474px;width:48px;height:18px;padding-top:3px;font-size:12px;color:#000">1.8k</div>
<div class="btn" style="left:1116px;top:492px;width:48px;height:18px;padding-top:3px;font-size:12px;color:#000">1.0k</div>
<div class="btn" style="left:1164px;top:492px;width:48px;height:18px;padding-top:3px;font-size:12px;color:#000">Var 1</div>
<div class="btn" style="left:1212px;top:492px;width:48px;height:18px;padding-top:3px;font-size:12px;color:#000">Var 2</div>

  <div class="t" style="left:1115px;top:520px;font-size:11px">Low</div>
  <div class="tb" style="left:1139px;top:519px;width:46px;height:17px;padding:3px 0 0 2px;font-size:11px;color:#aca899">150</div>
  <div class="sp" style="left:1168px;top:520px;width:16px;height:8px"></div><div class="sp d" style="left:1168px;top:528px;width:16px;height:7px"></div>
  <div class="t" style="left:1189px;top:520px;font-size:11px">High</div>
  <div class="tb" style="left:1214px;top:519px;width:46px;height:17px;padding:3px 0 0 2px;font-size:11px;color:#aca899">2550</div>
  <div class="sp" style="left:1243px;top:520px;width:16px;height:8px"></div><div class="sp d" style="left:1243px;top:528px;width:16px;height:7px"></div>
  <div class="t" style="left:1118px;top:552px;font-size:11px">Width:</div>
  <div class="sld" style="left:1156px;top:557px;width:96px"></div>
  <div class="thumb" style="left:1173px;top:551px"></div>
  <div class="t" style="left:1118px;top:584px;font-size:11px">Shift:</div>
  <div class="sld" style="left:1156px;top:590px;width:64px"></div>
  <div class="thumb" style="left:1182px;top:583px"></div>
  <div class="btn" style="left:1228px;top:582px;width:32px;height:19px;padding-top:4px;font-size:11px">Res</div>

  <!-- Display group -->
  <div class="grp" style="left:124px;top:148px;width:975px;height:305px"></div>
  <div class="gl" style="left:131px;top:144px;font-size:11px">Display</div>
  <svg class="a" style="left:133px;top:160px" width="957" height="236">
<rect width="957" height="236" fill="#000"/>
<path d="M0 16.5H957" stroke="#7a2a9a" stroke-width="1"/>
<path d="M0 32.5H957" stroke="#7a2a9a" stroke-width="1"/>
<path d="M0 48.5H957" stroke="#7a2a9a" stroke-width="1"/>
<path d="M0 64.5H957" stroke="#7a2a9a" stroke-width="1"/>
<path d="M0 80.5H957" stroke="#7a2a9a" stroke-width="1"/>
<path d="M0 96.5H957" stroke="#7a2a9a" stroke-width="1"/>
<path d="M0 112.5H957" stroke="#7a2a9a" stroke-width="1"/>
<path d="M0 128.5H957" stroke="#7a2a9a" stroke-width="1"/>
<path d="M0 144.5H957" stroke="#7a2a9a" stroke-width="1"/>
<path d="M0 160.5H957" stroke="#7a2a9a" stroke-width="1"/>
<path d="M0 176.5H957" stroke="#7a2a9a" stroke-width="1"/>
<path d="M0 192.5H957" stroke="#7a2a9a" stroke-width="1"/>
<path d="M0 208.5H957" stroke="#7a2a9a" stroke-width="1"/>
<path d="M0 224.5H957" stroke="#7a2a9a" stroke-width="1"/>
<path d="M60.5 16V236" stroke="#7a30a8" stroke-width="1" stroke-dasharray="1,1"/>
<path d="M180.5 16V236" stroke="#7a30a8" stroke-width="1" stroke-dasharray="1,1"/>
<path d="M300.5 16V236" stroke="#7a30a8" stroke-width="1" stroke-dasharray="1,1"/>
<path d="M420.5 16V236" stroke="#7a30a8" stroke-width="1" stroke-dasharray="1,1"/>
<path d="M540.5 16V236" stroke="#7a30a8" stroke-width="1" stroke-dasharray="1,1"/>
<path d="M660.5 16V236" stroke="#7a30a8" stroke-width="1" stroke-dasharray="1,1"/>
<path d="M780.5 16V236" stroke="#7a30a8" stroke-width="1" stroke-dasharray="1,1"/>
<path d="M900.5 16V236" stroke="#7a30a8" stroke-width="1" stroke-dasharray="1,1"/>
<rect x="679" y="16" width="69" height="220" fill="#008000"/>
<path d="M679 16.5H748" stroke="#2e5e2e" stroke-width="1"/>
<path d="M679 32.5H748" stroke="#2e5e2e" stroke-width="1"/>
<path d="M679 48.5H748" stroke="#2e5e2e" stroke-width="1"/>
<path d="M679 64.5H748" stroke="#2e5e2e" stroke-width="1"/>
<path d="M679 80.5H748" stroke="#2e5e2e" stroke-width="1"/>
<path d="M679 96.5H748" stroke="#2e5e2e" stroke-width="1"/>
<path d="M679 112.5H748" stroke="#2e5e2e" stroke-width="1"/>
<path d="M679 128.5H748" stroke="#2e5e2e" stroke-width="1"/>
<path d="M679 144.5H748" stroke="#2e5e2e" stroke-width="1"/>
<path d="M679 160.5H748" stroke="#2e5e2e" stroke-width="1"/>
<path d="M679 176.5H748" stroke="#2e5e2e" stroke-width="1"/>
<path d="M679 192.5H748" stroke="#2e5e2e" stroke-width="1"/>
<path d="M679 208.5H748" stroke="#2e5e2e" stroke-width="1"/>
<path d="M679 224.5H748" stroke="#2e5e2e" stroke-width="1"/>
<g font-family="Liberation Sans" font-size="12" fill="#f4f070" text-anchor="middle">
<text x="63" y="14">14,045</text>
<text x="183" y="14">14,050</text>
<text x="303" y="14">14,055</text>
<text x="423" y="14">14,060</text>
<text x="543" y="14">14,065</text>
<text x="663" y="14">14,070</text>
<text x="783" y="14">14,075</text>
<text x="903" y="14">14,080</text>
</g><g font-family="Liberation Sans" font-size="12" fill="#f4f070" text-anchor="end">
<text x="31" y="36.3">-20</text>
<text x="31" y="52.3">-30</text>
<text x="31" y="68.3">-40</text>
<text x="31" y="84.3">-50</text>
<text x="31" y="100.3">-60</text>
<text x="31" y="116.3">-70</text>
<text x="31" y="132.3">-80</text>
<text x="31" y="148.3">-90</text>
<text x="31" y="164.3">-100</text>
<text x="31" y="180.3">-110</text>
<text x="31" y="196.3">-120</text>
<text x="31" y="212.3">-130</text>
<text x="31" y="228.3">-140</text>
</g>
<rect x="673" y="16" width="2" height="220" fill="#f01010"/>
<path d="M0.0,235.5 L2.0,235.5 L4.0,235.5 L6.0,235.5 L8.0,235.5 L10.0,235.5 L12.0,235.5 L14.0,235.5 L16.0,235.5 L18.0,235.5 L20.0,235.5 L22.0,235.5 L24.0,235.5 L26.0,235.5 L28.0,235.5 L30.0,235.5 L32.0,235.5 L34.0,235.5 L36.0,235.5 L38.0,235.5 L40.0,235.5 L42.0,235.5 L44.0,235.5 L46.0,235.5 L48.0,235.5 L50.0,235.5 L52.0,235.5 L54.0,235.5 L56.0,235.5 L58.0,235.5 L60.0,235.5 L62.0,235.5 L64.0,235.5 L66.0,235.5 L68.0,235.5 L70.0,235.5 L72.0,235.5 L74.0,235.5 L76.0,235.5 L78.0,235.5 L80.0,235.5 L82.0,235.5 L84.0,235.5 L86.0,235.5 L88.0,235.5 L90.0,235.5 L92.0,235.5 L94.0,235.5 L96.0,235.5 L98.0,235.5 L100.0,235.5 L102.0,235.5 L104.0,235.5 L106.0,235.5 L108.0,235.5 L110.0,235.5 L112.0,235.5 L114.0,235.5 L116.0,235.5 L118.0,235.5 L120.0,235.5 L122.0,235.5 L124.0,235.5 L126.0,235.5 L128.0,235.5 L130.0,235.5 L132.0,235.5 L134.0,235.5 L136.0,235.5 L138.0,235.5 L140.0,235.5 L142.0,235.5 L144.0,235.5 L146.0,235.5 L148.0,235.5 L150.0,235.5 L152.0,235.5 L154.0,235.5 L156.0,235.5 L158.0,235.5 L160.0,235.5 L162.0,235.5 L164.0,235.5 L166.0,235.5 L168.0,235.5 L170.0,235.5 L172.0,235.5 L174.0,235.5 L176.0,235.5 L178.0,235.5 L180.0,235.5 L182.0,235.5 L184.0,235.5 L186.0,235.5 L188.0,235.5 L190.0,235.5 L192.0,235.5 L194.0,235.5 L196.0,235.5 L198.0,235.5 L200.0,235.5 L202.0,235.5 L204.0,235.5 L206.0,235.5 L208.0,235.5 L210.0,235.5 L212.0,235.5 L214.0,235.5 L216.0,235.5 L218.0,235.5 L220.0,235.5 L222.0,235.5 L224.0,235.5 L226.0,235.5 L228.0,235.5 L230.0,235.5 L232.0,235.5 L234.0,235.5 L236.0,235.5 L238.0,235.5 L240.0,235.5 L242.0,235.5 L244.0,235.5 L246.0,235.5 L248.0,235.5 L250.0,235.5 L252.0,235.5 L254.0,235.5 L256.0,235.5 L258.0,235.5 L260.0,235.5 L262.0,235.5 L264.0,235.5 L266.0,235.5 L268.0,235.5 L270.0,235.5 L272.0,235.5 L274.0,235.5 L276.0,235.5 L278.0,235.5 L280.0,235.5 L282.0,235.5 L284.0,235.5 L286.0,235.5 L288.0,235.5 L290.0,235.5 L292.0,235.5 L294.0,235.5 L296.0,235.5 L298.0,235.5 L300.0,235.5 L302.0,235.5 L304.0,235.5 L306.0,235.5 L308.0,235.5 L310.0,235.5 L312.0,235.5 L314.0,235.5 L316.0,235.5 L318.0,235.5 L320.0,235.5 L322.0,235.5 L324.0,235.5 L326.0,235.5 L328.0,235.5 L330.0,235.5 L332.0,235.5 L334.0,235.5 L336.0,235.5 L338.0,235.5 L340.0,235.5 L342.0,235.5 L344.0,235.5 L346.0,235.5 L348.0,235.5 L350.0,235.5 L352.0,235.5 L354.0,234.5 L356.0,235.5 L358.0,235.5 L360.0,235.5 L362.0,235.5 L364.0,235.5 L366.0,234.5 L368.0,235.5 L370.0,235.0 L372.0,235.5 L374.0,235.5 L376.0,235.5 L378.0,235.5 L380.0,235.0 L382.0,235.5 L384.0,235.5 L386.0,235.0 L388.0,235.5 L390.0,235.5 L392.0,235.5 L394.0,234.5 L396.0,235.5 L398.0,235.5 L400.0,235.5 L402.0,235.5 L404.0,235.5 L406.0,235.5 L408.0,235.5 L410.0,235.5 L412.0,235.5 L414.0,235.5 L416.0,235.5 L418.0,235.5 L420.0,235.5 L422.0,235.5 L424.0,235.0 L426.0,235.5 L428.0,235.5 L430.0,235.4 L432.0,234.9 L434.0,235.3 L436.0,235.3 L438.0,235.2 L440.0,235.2 L442.0,235.1 L444.0,235.1 L446.0,235.0 L448.0,235.0 L450.0,234.9 L452.0,234.9 L454.0,234.8 L456.0,234.8 L458.0,233.7 L460.0,234.7 L462.0,234.6 L464.0,233.6 L466.0,233.5 L468.0,234.5 L470.0,234.4 L472.0,234.3 L474.0,234.2 L476.0,234.2 L478.0,233.6 L480.0,234.0 L482.0,233.4 L484.0,233.9 L486.0,233.3 L488.0,233.7 L490.0,232.6 L492.0,233.6 L494.0,233.5 L496.0,233.4 L498.0,233.3 L500.0,233.3 L502.0,232.2 L504.0,233.1 L506.0,233.0 L508.0,233.0 L510.0,231.9 L512.0,232.8 L514.0,232.8 L516.0,232.7 L518.0,232.6 L520.0,232.1 L522.0,232.5 L524.0,232.4 L526.0,232.4 L528.0,232.3 L530.0,232.2 L532.0,232.2 L534.0,232.1 L536.0,232.0 L538.0,232.0 L540.0,231.9 L542.0,231.8 L544.0,231.8 L546.0,231.7 L548.0,231.6 L550.0,231.6 L552.0,230.5 L554.0,231.4 L556.0,231.4 L558.0,231.3 L560.0,230.7 L562.0,231.2 L564.0,231.1 L566.0,231.0 L568.0,230.9 L570.0,229.6 L572.0,229.9 L574.0,230.1 L576.0,229.9 L578.0,229.6 L580.0,228.4 L582.0,229.1 L584.0,228.9 L586.0,228.6 L588.0,228.4 L590.0,227.6 L592.0,227.9 L594.0,227.6 L596.0,226.9 L598.0,227.1 L600.0,226.9 L602.0,226.6 L604.0,225.9 L606.0,226.1 L608.0,225.7 L610.0,224.2 L612.0,224.7 L614.0,223.1 L616.0,222.6 L618.0,223.0 L620.0,221.5 L622.0,222.0 L624.0,221.4 L626.0,219.9 L628.0,219.8 L630.0,219.8 L632.0,219.3 L633.0,218.5 L634.0,217.7 L635.0,215.3 L636.0,215.0 L637.0,216.3 L638.0,217.7 L639.0,218.0 L640.0,218.8 L641.0,218.6 L642.0,218.3 L644.0,217.9 L646.0,217.4 L648.0,217.0 L650.0,216.6 L652.0,216.1 L654.0,214.7 L656.0,215.2 L658.0,214.7 L660.0,214.2 L662.0,213.6 L664.0,213.1 L666.0,211.5 L668.0,211.9 L670.0,211.4 L672.0,210.8 L674.0,209.3 L676.0,209.3 L678.0,208.0 L679.0,154.0 L681.0,156.0 L683.0,162.0 L686.0,165.0 L689.0,192.0 L692.0,180.0 L694.0,170.0 L696.0,134.0 L698.0,145.0 L700.0,173.0 L703.0,158.0 L707.0,102.0 L710.0,50.0 L712.0,8.0 L714.0,30.0 L717.0,90.0 L721.0,130.0 L725.0,170.0 L727.0,178.0 L729.0,140.0 L731.0,102.0 L733.0,140.0 L735.0,188.0 L738.0,180.0 L741.0,170.0 L744.0,158.0 L746.0,140.0 L748.0,170.0 L749.0,212.0 L750.0,213.0 L752.0,215.0 L754.0,215.3 L756.0,215.7 L758.0,215.5 L760.0,216.4 L762.0,216.7 L764.0,216.1 L766.0,217.4 L768.0,217.7 L770.0,218.1 L772.0,218.4 L774.0,218.8 L776.0,219.1 L778.0,218.5 L780.0,219.8 L782.0,220.1 L784.0,220.0 L786.0,220.8 L788.0,220.6 L790.0,221.3 L792.0,221.5 L794.0,221.7 L796.0,221.9 L798.0,222.1 L800.0,221.3 L802.0,222.5 L804.0,222.7 L806.0,222.9 L808.0,223.1 L810.0,222.3 L812.0,223.5 L814.0,223.7 L816.0,223.9 L818.0,224.1 L820.0,224.3 L822.0,224.5 L824.0,224.7 L826.0,223.9 L828.0,225.1 L830.0,225.3 L832.0,225.0 L834.0,224.7 L836.0,225.9 L838.0,225.6 L840.0,226.3 L842.0,226.5 L844.0,226.7 L846.0,226.9 L848.0,227.1 L850.0,227.3 L852.0,227.0 L854.0,227.7 L856.0,227.4 L858.0,228.1 L860.0,228.3 L862.0,228.5 L864.0,228.7 L866.0,228.9 L868.0,229.1 L870.0,229.2 L872.0,229.4 L874.0,229.5 L876.0,229.7 L878.0,229.3 L880.0,229.5 L882.0,230.1 L884.0,229.3 L886.0,230.4 L888.0,230.6 L890.0,230.2 L892.0,229.9 L894.0,231.0 L896.0,231.2 L898.0,231.3 L900.0,231.5 L902.0,231.6 L904.0,231.3 L906.0,231.9 L908.0,232.1 L910.0,232.2 L912.0,232.4 L914.0,232.0 L916.0,232.1 L918.0,232.3 L920.0,232.9 L922.0,232.1 L924.0,233.2 L926.0,232.4 L928.0,233.0 L930.0,233.1 L932.0,233.8 L934.0,233.9 L936.0,234.1 L938.0,233.2 L940.0,234.4 L942.0,234.0 L944.0,234.6 L946.0,234.8 L948.0,234.9 L950.0,234.1 L952.0,235.2 L954.0,235.4" fill="none" stroke="#d8f0c0" stroke-width="1.1"/>
</svg>
  <div class="blk" style="left:132px;top:400px;width:960px;height:18px"></div>
  <div class="t" style="left:819px;top:402px;font-size:13px;color:#4070d0">1573,0Hz</div>
  <div class="t" style="left:911px;top:402px;font-size:13px;color:#4070d0">0,0dBm</div>
  <div class="t" style="left:988px;top:402px;font-size:13px;color:#4070d0">14,072 154 MHz</div>
  <div class="t" style="left:134px;top:428px;font-size:11px">Pan:</div>
  <div class="sld" style="left:170px;top:429px;width:442px"></div>
  <div class="thumb" style="left:601px;top:423px"></div>
  <div class="btn" style="left:620px;top:424px;width:48px;height:20px;padding-top:4px;font-size:11px">Center</div>
  <div class="t" style="left:694px;top:428px;font-size:11px">Zoom:</div>
  <div class="sld" style="left:732px;top:429px;width:184px"></div>
  <div class="thumb" style="left:760px;top:423px"></div>
  <div class="a" style="left:932px;top:424px;width:40px;height:19px;background:#ff0;border:1px solid;border-color:#ffffa0 #000 #000 #ffffa0;padding-top:4px;text-align:center;font-size:11px;line-height:1">0.5x</div>
  <div class="btn" style="left:980px;top:424px;width:32px;height:19px;padding-top:4px;font-size:11px">1x</div>
  <div class="btn" style="left:1020px;top:424px;width:32px;height:19px;padding-top:4px;font-size:11px">2x</div>
  <div class="btn" style="left:1060px;top:424px;width:32px;height:19px;padding-top:4px;font-size:11px">4x</div>

  <!-- digital group (partly hidden) -->
  <div class="grp" style="left:800px;top:459px;width:235px;height:156px;border-bottom:0"></div>
  <div class="gl" style="left:827px;top:455px;font-size:11px;padding-right:8px">Digital</div>
  <div class="grp" style="left:884px;top:476px;width:95px;height:48px"></div>
  <div class="gl" style="left:892px;top:472px;font-size:11px">Sample Rate</div>
  <div class="tb" style="left:900px;top:495px;width:62px;height:18px;padding:3px 0 0 3px;font-size:11px">48000</div>
  <div class="dd" style="left:944px;top:497px;width:17px;height:15px"></div>
  <div class="grp" style="left:884px;top:540px;width:95px;height:48px"></div>
  <div class="gl" style="left:892px;top:536px;font-size:11px">Mono/Stereo</div>
  <div class="a" style="left:900px;top:560px;width:12px;height:12px;border:1px solid #9d9a8a;background:#fff"></div>
  <div class="t" style="left:919px;top:561px;font-size:11px">Stereo</div>
  <div class="tb" style="left:820px;top:479px;width:45px;height:17px"></div>
  <div class="sp" style="left:849px;top:480px;width:15px;height:8px"></div><div class="sp d" style="left:849px;top:488px;width:15px;height:7px"></div>
  <div class="sld" style="left:820px;top:506px;width:44px"></div>
  <div class="tb" style="left:820px;top:527px;width:45px;height:17px"></div>
  <div class="sp" style="left:849px;top:528px;width:15px;height:8px"></div><div class="sp d" style="left:849px;top:536px;width:15px;height:7px"></div>
  <div class="sld" style="left:820px;top:555px;width:44px"></div>
  <div class="tb" style="left:820px;top:583px;width:45px;height:18px"></div>
  <div class="dd" style="left:847px;top:585px;width:17px;height:15px"></div>

</div>


<!-- MMVARI WINDOW -->
<div id="mm" class="a" style="left:5px;top:455px;width:834px;height:558px;background:#0846d8;border-radius:8px 8px 0 0">
  <div class="a" style="left:0;top:0;width:834px;height:34px;border-radius:8px 8px 0 0;background:linear-gradient(#0a4aa8 0,#3a8cf2 1px,#1a70f4 3px,#0058e8 6px,#0054de 14px,#0058e4 24px,#0066fc 26px,#0064f8 31px,#0846b0 33px,#0a3a98 34px)"></div>
  <div class="a" style="left:6px;top:10px;width:16px;height:16px;background:#000"></div>
  <svg class="a" style="left:6px;top:10px" width="16" height="16"><path d="M3 0H8V2H13V4H8V6H13V8H8V10H13V12H8V14H11V16H5V14H3V12H5V10H3V8H5V6H3V4H5V2H3Z" fill="#fff"/></svg>
  <div class="t" style="left:26px;top:10px;font-size:18px;font-weight:bold;color:#fff;letter-spacing:0.55px">RV9AT (RV9AT.MDT) - MMVARI beta ver 0.42</div>
  <div class="a" style="left:749px;top:6px;width:25px;height:25px;border:1px solid #fff;border-radius:3px;background:linear-gradient(135deg,#5a8ef8,#2a62e8)"></div>
  <div class="a" style="left:755px;top:22px;width:9px;height:3px;background:#fff"></div>
  <div class="a" style="left:776px;top:6px;width:25px;height:25px;border:1px solid #fff;border-radius:3px;background:linear-gradient(135deg,#5a8ef8,#2a62e8)"></div>
  <div class="a" style="left:782px;top:12px;width:13px;height:13px;border:1px solid #fff;border-top-width:3px"></div>
  <div class="a" style="left:803px;top:6px;width:25px;height:25px;border:1px solid #fff;border-radius:3px;background:linear-gradient(135deg,#e8784a,#d04a22)"></div>
  <svg class="a" style="left:803px;top:6px" width="25" height="25"><path d="M7 6L18 18M18 6L7 18" stroke="#fff" stroke-width="2.6"/></svg>

  <div class="a" id="mclient" style="left:5px;top:34px;width:824px;height:519px;background:#ECE9D8"></div>
</div>

<!-- MMVARI client content (page coords) -->
<div class="t" style="left:15px;top:492px;font-size:12px">File</div>
<div class="t" style="left:49px;top:492px;font-size:12px">Edit</div>
<div class="t" style="left:84px;top:492px;font-size:12px">View</div>
<div class="t" style="left:126px;top:492px;font-size:12px">Options</div>
<div class="t" style="left:183px;top:492px;font-size:12px">Help</div>
<div class="a" style="left:10px;top:508px;width:824px;height:1px;background:#fff"></div>

<div class="a" style="left:11px;top:515px;width:66px;height:24px;background:#f4f3ee;border:1px solid;border-color:#716F64 #fff #fff #716F64;box-shadow:inset 1px 1px 0 #ACA899;padding-top:6px;text-align:center;font-size:12px;font-weight:bold;color:#e01818;line-height:1">ReqRX</div>
<div class="btn" style="left:11px;top:540px;width:66px;height:24px;padding-top:6px;font-size:12px;font-weight:bold">TXOFF</div>
<div class="tb" style="left:11px;top:595px;width:66px;height:19px;padding:4px 0 0 3px;font-size:12px;font-weight:bold">bpsk</div>
<div class="dd" style="left:59px;top:597px;width:17px;height:16px"></div>

<div class="grp" style="left:80px;top:517px;width:30px;height:99px"></div>
<div class="gl" style="left:85px;top:513px;font-size:12px;font-weight:bold;padding:0 1px">BPF</div>
<div class="a" style="left:83px;top:526px;width:23px;height:21px;background:#f4f3ee;border:1px solid;border-color:#716F64 #fff #fff #716F64"></div>
<div class="btn" style="left:83px;top:548px;width:23px;height:21px"></div>
<div class="btn" style="left:83px;top:570px;width:23px;height:21px"></div>
<div class="btn" style="left:83px;top:593px;width:23px;height:21px"></div>
<svg class="a" style="left:83px;top:526px" width="23" height="88" fill="none" stroke="#000" stroke-width="1.3">
  <path d="M5.5 18.5L6.8 5H19.2L20.5 18.5"/>
  <path d="M4 39.7H7L8.8 26.8H16L17.8 39.7H20"/>
  <path d="M4 62.4H7.5L9.8 49.8H14.3L15.9 62.4H20"/>
  <path d="M4 84.6H9L10.8 71H13.2L15 84.6H20"/>
</svg>

<div class="grp" style="left:113px;top:517px;width:154px;height:55px"></div>
<div class="gl" style="left:118px;top:513px;font-size:12px;font-weight:bold;padding:0 1px">Carrier(Hz)</div>
<div class="t" style="left:121px;top:529px;font-size:12px;font-weight:bold">RX</div>
<div class="tb" style="left:143px;top:526px;width:61px;height:20px;padding:4px 0 0 3px;font-size:12px;font-weight:bold;color:#aca899">1574</div>
<div class="dd" style="left:186px;top:528px;width:17px;height:17px;opacity:.5"></div>
<div class="sp" style="left:206px;top:525px;width:18px;height:10px"></div><div class="sp d" style="left:206px;top:535px;width:18px;height:11px"></div>
<div class="btn" style="left:227px;top:526px;width:29px;height:18px;padding-top:3px;font-size:12px;font-weight:bold">AFC</div>
<div class="t" style="left:121px;top:553px;font-size:12px;font-weight:bold">TX</div>
<div class="tb" style="left:143px;top:549px;width:61px;height:20px;padding:4px 0 0 3px;font-size:12px;font-weight:bold">1574</div>
<div class="dd" style="left:186px;top:551px;width:17px;height:17px"></div>
<div class="sp" style="left:206px;top:548px;width:18px;height:10px"></div><div class="sp d" style="left:206px;top:558px;width:18px;height:11px"></div>
<div class="btn" style="left:227px;top:550px;width:29px;height:18px;padding-top:3px;font-size:12px;font-weight:bold">NET</div>

<div class="grp" style="left:113px;top:581px;width:65px;height:33px"></div>
<div class="gl" style="left:118px;top:577px;font-size:12px;font-weight:bold;padding:0 1px">Speed</div>
<div class="tb" style="left:116px;top:591px;width:60px;height:20px;padding:4px 0 0 2px;font-size:12px;font-weight:bold">31.25</div>
<div class="dd" style="left:158px;top:593px;width:17px;height:17px"></div>
<div class="grp" style="left:181px;top:581px;width:86px;height:33px"></div>
<div class="gl" style="left:187px;top:577px;font-size:12px;font-weight:bold;padding:0 1px">Timing(ppm)</div>
<div class="tb" style="left:184px;top:591px;width:54px;height:22px;padding:5px 0 0 3px;font-size:12px;font-weight:bold;color:#aca899">610</div>
<div class="sp" style="left:226px;top:592px;width:12px;height:10px"></div><div class="sp d" style="left:226px;top:602px;width:12px;height:10px"></div>
<div class="t" style="left:240px;top:597px;font-size:12px;font-weight:bold">ATC</div>

<div class="btn" style="left:270px;top:516px;width:48px;height:18px;padding-top:3px;font-size:12px;font-weight:bold">FFT</div>
<div class="a" style="left:270px;top:534px;width:48px;height:17px;background:#f4f3ee;border:1px solid;border-color:#716F64 #fff #fff #716F64;padding-top:3px;text-align:center;font-size:12px;font-weight:bold;line-height:1">W.F.</div>
<div class="btn" style="left:270px;top:551px;width:48px;height:18px;padding-top:3px;font-size:12px;font-weight:bold">Sync</div>
<div class="a" style="left:271px;top:570px;width:46px;height:10px;background:#000;border:1px solid;border-color:#716F64 #fff #fff #716F64"></div>
<div class="a" style="left:294px;top:571px;width:1px;height:8px;background:#2c2"></div>
<div class="btn" style="left:270px;top:581px;width:24px;height:17px;padding-top:3px;font-size:12px;font-weight:bold">500</div>
<div class="btn" style="left:294px;top:581px;width:24px;height:17px;padding-top:3px;font-size:12px;font-weight:bold">1K</div>
<div class="a" style="left:270px;top:598px;width:24px;height:18px;background:#f4f3ee;border:1px solid;border-color:#716F64 #fff #fff #716F64;padding-top:4px;text-align:center;font-size:12px;font-weight:bold;line-height:1">2K</div>
<div class="btn" style="left:294px;top:598px;width:24px;height:18px;padding-top:3px;font-size:12px;font-weight:bold">3K</div>

<div class="a" style="left:320px;top:511px;width:18px;height:106px;background:#ffff00;border:1px solid;border-color:#716F64 #fff #fff #716F64"></div>
<div class="a" style="left:321px;top:607px;width:16px;height:1px;background:#000"></div>
<svg class="a" style="left:342px;top:512px" width="489" height="104">
<rect width="489" height="104" fill="#000"/>
<defs><filter id="bl" x="-20%" y="-20%" width="140%" height="140%"><feGaussianBlur stdDeviation="0.8"/></filter></defs>
<rect x="116.4" y="90.8" width="3.5" height="2.2" fill="#032"/>
<rect x="32.0" y="75.4" width="5.3" height="1.5" fill="#011"/>
<rect x="93.8" y="95.8" width="4.2" height="2.1" fill="#022"/>
<rect x="312.5" y="79.4" width="4.5" height="2.7" fill="#032"/>
<rect x="190.7" y="75.4" width="5.1" height="1.3" fill="#032"/>
<rect x="20.9" y="97.6" width="5.3" height="1.5" fill="#032"/>
<rect x="351.5" y="100.5" width="4.9" height="2.8" fill="#022"/>
<rect x="356.1" y="91.7" width="5.9" height="1.3" fill="#021"/>
<rect x="47.7" y="78.9" width="2.9" height="2.9" fill="#022"/>
<rect x="380.9" y="99.8" width="3.7" height="2.7" fill="#032"/>
<rect x="171.6" y="92.0" width="4.3" height="2.8" fill="#011"/>
<rect x="418.8" y="103.7" width="4.7" height="1.3" fill="#021"/>
<rect x="471.7" y="101.2" width="4.3" height="2.4" fill="#011"/>
<rect x="309.5" y="103.7" width="3.1" height="1.2" fill="#022"/>
<rect x="417.6" y="103.7" width="2.4" height="2.6" fill="#022"/>
<rect x="438.7" y="75.6" width="3.7" height="1.8" fill="#011"/>
<rect x="21.6" y="92.8" width="2.2" height="2.4" fill="#021"/>
<rect x="269.4" y="101.7" width="3.1" height="1.5" fill="#011"/>
<rect x="151.4" y="77.2" width="4.4" height="1.1" fill="#011"/>
<rect x="475.0" y="83.5" width="3.1" height="2.4" fill="#021"/>
<rect x="153.5" y="102.8" width="5.6" height="1.8" fill="#022"/>
<rect x="425.4" y="86.2" width="5.5" height="2.4" fill="#011"/>
<rect x="303.2" y="102.3" width="4.0" height="1.9" fill="#011"/>
<rect x="457.9" y="87.7" width="3.0" height="1.6" fill="#021"/>
<rect x="5.6" y="87.0" width="4.3" height="1.0" fill="#032"/>
<rect x="288.1" y="78.9" width="4.5" height="1.7" fill="#021"/>
<rect x="332.2" y="85.2" width="4.8" height="2.5" fill="#011"/>
<rect x="288.2" y="102.7" width="2.1" height="1.7" fill="#022"/>
<rect x="146.0" y="92.4" width="2.7" height="1.4" fill="#021"/>
<rect x="412.6" y="82.7" width="5.1" height="1.2" fill="#011"/>
<rect x="475.0" y="94.8" width="2.5" height="2.0" fill="#021"/>
<rect x="116.7" y="80.4" width="3.7" height="2.4" fill="#011"/>
<rect x="293.8" y="102.5" width="4.7" height="1.4" fill="#011"/>
<rect x="39.1" y="96.5" width="2.9" height="2.1" fill="#021"/>
<rect x="110.0" y="78.5" width="4.1" height="1.4" fill="#032"/>
<rect x="89.8" y="83.1" width="5.2" height="2.3" fill="#032"/>
<rect x="168.8" y="78.8" width="3.2" height="2.6" fill="#021"/>
<rect x="227.2" y="93.4" width="3.2" height="2.1" fill="#011"/>
<rect x="450.2" y="79.5" width="2.0" height="2.9" fill="#032"/>
<rect x="482.6" y="87.6" width="5.8" height="2.9" fill="#011"/>
<rect x="15.8" y="88.2" width="5.0" height="2.5" fill="#021"/>
<rect x="265.9" y="100.8" width="5.4" height="2.7" fill="#021"/>
<rect x="58.7" y="82.1" width="2.1" height="2.6" fill="#032"/>
<rect x="451.8" y="101.0" width="5.6" height="2.2" fill="#011"/>
<rect x="235.2" y="78.5" width="4.0" height="1.5" fill="#011"/>
<rect x="256.7" y="87.0" width="5.8" height="2.2" fill="#021"/>
<rect x="61.3" y="103.2" width="4.2" height="2.6" fill="#011"/>
<rect x="172.1" y="80.7" width="4.1" height="2.6" fill="#011"/>
<rect x="117.1" y="82.9" width="5.6" height="1.3" fill="#011"/>
<rect x="238.4" y="91.6" width="3.6" height="2.5" fill="#011"/>
<rect x="131.3" y="90.3" width="3.7" height="1.9" fill="#011"/>
<rect x="419.1" y="97.5" width="2.2" height="1.1" fill="#022"/>
<rect x="476.6" y="99.8" width="2.3" height="2.0" fill="#021"/>
<rect x="76.8" y="77.1" width="3.5" height="1.8" fill="#021"/>
<rect x="176.4" y="80.5" width="3.3" height="1.2" fill="#032"/>
<rect x="1.7" y="96.0" width="5.2" height="2.1" fill="#011"/>
<rect x="182.5" y="92.5" width="5.1" height="1.8" fill="#011"/>
<rect x="304.6" y="87.5" width="3.5" height="2.0" fill="#021"/>
<rect x="205.6" y="95.1" width="3.8" height="1.5" fill="#032"/>
<rect x="132.1" y="92.1" width="5.2" height="1.4" fill="#011"/>
<rect x="430.2" y="102.2" width="3.5" height="2.8" fill="#021"/>
<rect x="59.4" y="95.0" width="5.8" height="2.5" fill="#032"/>
<rect x="387.5" y="94.4" width="4.9" height="2.1" fill="#011"/>
<rect x="396.9" y="95.8" width="3.9" height="1.5" fill="#022"/>
<rect x="21.7" y="77.7" width="2.4" height="2.8" fill="#011"/>
<rect x="400.7" y="84.9" width="5.4" height="1.1" fill="#011"/>
<rect x="329.4" y="99.2" width="5.8" height="2.2" fill="#011"/>
<rect x="17.7" y="97.3" width="4.0" height="2.4" fill="#011"/>
<rect x="271.1" y="77.9" width="4.2" height="2.1" fill="#032"/>
<rect x="88.2" y="77.2" width="6.0" height="2.3" fill="#022"/>
<rect x="301.2" y="96.9" width="3.6" height="1.7" fill="#022"/>
<rect x="459.1" y="91.1" width="5.9" height="1.8" fill="#011"/>
<rect x="475.8" y="87.0" width="5.0" height="1.3" fill="#032"/>
<rect x="369.7" y="94.5" width="4.1" height="2.0" fill="#022"/>
<rect x="438.8" y="79.3" width="2.4" height="2.5" fill="#032"/>
<rect x="464.9" y="92.0" width="5.4" height="1.3" fill="#011"/>
<rect x="71.7" y="90.0" width="5.7" height="2.7" fill="#032"/>
<rect x="466.2" y="83.6" width="4.8" height="1.8" fill="#032"/>
<rect x="285.9" y="82.7" width="2.9" height="1.0" fill="#022"/>
<rect x="393.2" y="80.8" width="4.3" height="1.5" fill="#022"/>
<rect x="378.6" y="79.2" width="6.0" height="2.0" fill="#032"/>
<rect x="100.6" y="91.8" width="5.6" height="2.3" fill="#011"/>
<rect x="235.4" y="95.9" width="5.4" height="1.8" fill="#011"/>
<rect x="228.6" y="81.7" width="2.9" height="2.4" fill="#011"/>
<rect x="468.8" y="99.8" width="3.0" height="1.4" fill="#021"/>
<rect x="67.2" y="93.0" width="4.7" height="1.1" fill="#021"/>
<rect x="83.0" y="76.3" width="2.7" height="1.2" fill="#011"/>
<rect x="57.7" y="82.7" width="5.7" height="1.1" fill="#022"/>
<rect x="283.8" y="94.6" width="2.0" height="1.7" fill="#022"/>
<rect x="185.7" y="77.3" width="4.6" height="2.5" fill="#022"/>
<rect x="191.2" y="90.8" width="2.5" height="1.5" fill="#022"/>
<rect x="55.0" y="100.7" width="5.6" height="1.2" fill="#021"/>
<rect x="331.8" y="85.7" width="3.8" height="2.3" fill="#021"/>
<rect x="52.4" y="102.4" width="3.4" height="2.1" fill="#032"/>
<rect x="55.4" y="89.3" width="3.4" height="2.4" fill="#032"/>
<rect x="363.0" y="93.7" width="4.9" height="1.3" fill="#021"/>
<rect x="435.2" y="94.0" width="2.5" height="2.9" fill="#011"/>
<rect x="450.3" y="93.7" width="4.6" height="1.8" fill="#021"/>
<rect x="316.6" y="88.3" width="3.2" height="1.4" fill="#011"/>
<rect x="52.5" y="80.3" width="4.2" height="2.2" fill="#022"/>
<rect x="175.7" y="82.7" width="3.5" height="2.7" fill="#011"/>
<rect x="234.1" y="82.9" width="4.8" height="2.0" fill="#021"/>
<rect x="462.1" y="88.0" width="5.2" height="1.1" fill="#022"/>
<rect x="414.1" y="78.3" width="3.1" height="1.2" fill="#011"/>
<rect x="276.0" y="101.4" width="2.4" height="2.4" fill="#032"/>
<rect x="203.7" y="96.6" width="5.3" height="2.5" fill="#032"/>
<rect x="297.3" y="99.9" width="5.2" height="2.1" fill="#011"/>
<rect x="277.9" y="80.9" width="3.0" height="2.6" fill="#011"/>
<rect x="411.9" y="87.9" width="3.6" height="2.6" fill="#021"/>
<rect x="270.2" y="91.9" width="4.5" height="3.0" fill="#021"/>
<rect x="438.0" y="94.4" width="2.1" height="1.4" fill="#011"/>
<rect x="52.6" y="96.9" width="2.9" height="1.3" fill="#022"/>
<rect x="97.3" y="97.7" width="2.8" height="2.6" fill="#022"/>
<rect x="54.6" y="83.2" width="4.6" height="1.3" fill="#022"/>
<rect x="387.5" y="93.1" width="2.2" height="1.7" fill="#011"/>
<rect x="247.4" y="89.5" width="2.1" height="1.7" fill="#021"/>
<rect x="425.7" y="95.1" width="2.5" height="2.7" fill="#032"/>
<rect x="379.1" y="76.0" width="2.3" height="3.0" fill="#011"/>
<rect x="455.6" y="100.0" width="3.7" height="2.5" fill="#022"/>
<rect x="154.4" y="97.8" width="3.6" height="2.7" fill="#011"/>
<rect x="191.4" y="88.7" width="2.3" height="2.7" fill="#011"/>
<rect x="317.5" y="83.8" width="3.9" height="2.5" fill="#022"/>
<rect x="214.4" y="88.2" width="2.1" height="1.5" fill="#021"/>
<rect x="218.9" y="85.5" width="3.6" height="2.9" fill="#011"/>
<rect x="126.5" y="85.7" width="5.4" height="2.1" fill="#011"/>
<rect x="102.3" y="80.0" width="3.6" height="1.3" fill="#011"/>
<rect x="68.1" y="92.7" width="3.8" height="1.4" fill="#011"/>
<rect x="197.1" y="84.2" width="2.1" height="2.4" fill="#011"/>
<rect x="197.2" y="86.5" width="2.1" height="2.9" fill="#011"/>
<rect x="118.1" y="86.3" width="2.8" height="1.7" fill="#011"/>
<rect x="169.4" y="78.6" width="2.2" height="2.5" fill="#021"/>
<rect x="479.8" y="102.3" width="5.2" height="2.9" fill="#022"/>
<rect x="122.2" y="82.7" width="5.3" height="2.3" fill="#021"/>
<rect x="155.0" y="76.6" width="3.7" height="1.2" fill="#032"/>
<rect x="1.8" y="75.9" width="2.4" height="1.3" fill="#011"/>
<rect x="235.6" y="80.5" width="4.0" height="1.7" fill="#022"/>
<rect x="166.3" y="88.9" width="3.4" height="2.3" fill="#022"/>
<rect x="149.0" y="92.6" width="5.8" height="1.2" fill="#021"/>
<rect x="90.0" y="87.0" width="4.0" height="2.1" fill="#032"/>
<rect x="332.5" y="101.9" width="2.7" height="2.5" fill="#022"/>
<rect x="408.6" y="91.0" width="5.7" height="1.7" fill="#022"/>
<rect x="214.4" y="87.9" width="4.8" height="1.7" fill="#011"/>
<rect x="247.9" y="96.8" width="5.7" height="2.4" fill="#022"/>
<rect x="20.9" y="80.0" width="5.0" height="2.6" fill="#011"/>
<rect x="370.9" y="94.6" width="2.4" height="1.5" fill="#011"/>
<rect x="429.6" y="100.3" width="3.8" height="2.8" fill="#021"/>
<rect x="487.5" y="75.0" width="2.8" height="2.6" fill="#011"/>
<rect x="165.5" y="84.0" width="3.8" height="2.6" fill="#011"/>
<rect x="117.7" y="76.4" width="2.6" height="2.3" fill="#032"/>
<rect x="481.8" y="78.3" width="3.2" height="1.4" fill="#032"/>
<rect x="252.1" y="89.6" width="5.6" height="1.6" fill="#032"/>
<rect x="382.5" y="88.6" width="4.5" height="1.1" fill="#011"/>
<rect x="292.5" y="99.9" width="2.4" height="2.9" fill="#021"/>
<rect x="41.9" y="88.5" width="2.9" height="2.7" fill="#032"/>
<rect x="53.2" y="89.1" width="4.7" height="2.4" fill="#022"/>
<rect x="294.9" y="87.9" width="2.4" height="2.7" fill="#032"/>
<rect x="217.0" y="86.0" width="2.5" height="1.0" fill="#021"/>
<rect x="356.0" y="77.2" width="3.4" height="2.0" fill="#011"/>
<rect x="451.8" y="94.9" width="3.5" height="2.6" fill="#011"/>
<rect x="296.3" y="81.2" width="3.4" height="3.0" fill="#021"/>
<rect x="115.5" y="87.7" width="3.0" height="1.6" fill="#011"/>
<rect x="355.2" y="100.4" width="5.9" height="2.2" fill="#032"/>
<rect x="416.9" y="85.7" width="2.8" height="2.2" fill="#022"/>
<rect x="236.8" y="97.4" width="3.6" height="3.0" fill="#011"/>
<rect x="142.8" y="102.1" width="2.7" height="1.2" fill="#011"/>
<rect x="143.9" y="90.1" width="4.6" height="1.1" fill="#011"/>
<rect x="135.0" y="87.5" width="3.4" height="2.5" fill="#021"/>
<rect x="69.9" y="87.9" width="5.6" height="1.9" fill="#011"/>
<rect x="74.9" y="97.1" width="4.8" height="3.0" fill="#021"/>
<rect x="461.0" y="87.5" width="5.8" height="1.9" fill="#032"/>
<rect x="108.9" y="102.7" width="3.2" height="1.1" fill="#021"/>
<rect x="433.7" y="98.4" width="3.2" height="1.5" fill="#032"/>
<rect x="4.9" y="78.8" width="4.1" height="2.1" fill="#011"/>
<rect x="464.6" y="75.1" width="5.9" height="2.6" fill="#021"/>
<rect x="478.9" y="97.8" width="5.9" height="1.1" fill="#011"/>
<rect x="116.7" y="83.0" width="5.6" height="2.7" fill="#032"/>
<rect x="267.0" y="77.7" width="3.2" height="1.5" fill="#022"/>
<rect x="204.5" y="82.6" width="2.2" height="1.9" fill="#011"/>
<rect x="446.2" y="98.4" width="3.0" height="1.3" fill="#022"/>
<rect x="248.8" y="99.1" width="4.2" height="1.6" fill="#011"/>
<rect x="22.2" y="89.1" width="2.2" height="2.6" fill="#022"/>
<rect x="228.6" y="94.3" width="5.7" height="2.6" fill="#032"/>
<rect x="252.0" y="85.8" width="4.5" height="1.6" fill="#011"/>
<rect x="334.4" y="103.8" width="4.2" height="1.8" fill="#021"/>
<rect x="217.2" y="83.1" width="3.0" height="1.6" fill="#032"/>
<rect x="75.9" y="84.1" width="4.1" height="1.8" fill="#011"/>
<rect x="404.7" y="102.0" width="4.4" height="1.1" fill="#032"/>
<rect x="292.3" y="78.4" width="2.5" height="2.6" fill="#021"/>
<rect x="50.1" y="94.4" width="3.5" height="2.0" fill="#022"/>
<rect x="95.4" y="101.7" width="2.7" height="1.8" fill="#022"/>
<rect x="154.6" y="82.9" width="5.8" height="2.9" fill="#021"/>
<rect x="298.6" y="91.1" width="2.1" height="1.8" fill="#022"/>
<rect x="479.3" y="77.3" width="2.9" height="1.4" fill="#011"/>
<rect x="341.4" y="78.3" width="4.5" height="1.2" fill="#011"/>
<rect x="460.7" y="103.3" width="4.8" height="1.9" fill="#022"/>
<rect x="225.8" y="83.4" width="4.2" height="1.3" fill="#022"/>
<rect x="468.3" y="79.2" width="5.6" height="1.4" fill="#022"/>
<rect x="329.9" y="93.8" width="2.6" height="1.1" fill="#011"/>
<rect x="152.1" y="93.8" width="2.5" height="1.3" fill="#032"/>
<rect x="469.8" y="90.5" width="3.5" height="1.2" fill="#022"/>
<rect x="88.9" y="75.8" width="2.4" height="1.2" fill="#021"/>
<rect x="62.1" y="85.2" width="5.7" height="1.2" fill="#011"/>
<rect x="3.6" y="85.8" width="2.6" height="2.0" fill="#011"/>
<rect x="173.3" y="102.6" width="3.9" height="2.4" fill="#021"/>
<rect x="231.2" y="96.4" width="4.1" height="2.7" fill="#022"/>
<rect x="278.2" y="88.5" width="4.2" height="1.9" fill="#032"/>
<rect x="223.1" y="86.1" width="5.0" height="1.6" fill="#011"/>
<rect x="147.1" y="99.9" width="5.8" height="1.6" fill="#011"/>
<rect x="63.8" y="92.5" width="2.2" height="2.2" fill="#011"/>
<rect x="56.0" y="75.4" width="5.5" height="2.6" fill="#032"/>
<rect x="335.2" y="90.2" width="5.1" height="1.2" fill="#032"/>
<rect x="284.1" y="84.4" width="4.4" height="1.4" fill="#022"/>
<rect x="247.6" y="85.8" width="3.3" height="1.7" fill="#032"/>
<rect x="377.0" y="96.0" width="3.4" height="2.4" fill="#021"/>
<rect x="140.2" y="103.3" width="3.1" height="1.2" fill="#032"/>
<rect x="108.2" y="103.9" width="4.9" height="1.5" fill="#022"/>
<rect x="472.8" y="88.1" width="3.9" height="2.1" fill="#011"/>
<rect x="482.4" y="90.3" width="3.8" height="2.2" fill="#011"/>
<rect x="204.1" y="90.9" width="4.4" height="1.6" fill="#011"/>
<rect x="417.8" y="86.1" width="5.9" height="1.7" fill="#011"/>
<rect x="27.1" y="89.3" width="2.5" height="2.5" fill="#022"/>
<rect x="347.9" y="85.5" width="3.2" height="2.0" fill="#022"/>
<rect x="214.8" y="101.3" width="4.7" height="1.2" fill="#022"/>
<rect x="71.5" y="81.4" width="3.5" height="2.2" fill="#011"/>
<rect x="432.9" y="81.1" width="3.7" height="1.4" fill="#011"/>
<rect x="263.5" y="101.7" width="4.1" height="2.5" fill="#011"/>
<rect x="215.8" y="94.8" width="2.5" height="2.8" fill="#022"/>
<rect x="110.0" y="79.0" width="3.2" height="2.1" fill="#011"/>
<rect x="402.7" y="92.4" width="2.3" height="1.1" fill="#021"/>
<rect x="187.2" y="89.2" width="5.9" height="1.9" fill="#011"/>
<rect x="190.1" y="89.8" width="3.7" height="2.3" fill="#021"/>
<rect x="213.3" y="77.8" width="5.9" height="2.4" fill="#011"/>
<rect x="31.5" y="100.4" width="5.0" height="1.6" fill="#011"/>
<rect x="158.6" y="101.5" width="4.5" height="1.2" fill="#021"/>
<rect x="315.0" y="100.6" width="2.9" height="1.6" fill="#022"/>
<rect x="468.5" y="76.5" width="4.1" height="2.8" fill="#032"/>
<rect x="256.1" y="91.6" width="2.3" height="1.5" fill="#022"/>
<rect x="403.1" y="101.6" width="3.6" height="1.7" fill="#022"/>
<rect x="323.4" y="90.3" width="2.8" height="1.6" fill="#032"/>
<rect x="65.0" y="90.4" width="4.5" height="1.7" fill="#032"/>
<rect x="419.3" y="96.4" width="2.8" height="1.1" fill="#022"/>
<rect x="419.4" y="93.3" width="4.0" height="2.7" fill="#011"/>
<rect x="402.3" y="102.2" width="2.5" height="2.8" fill="#022"/>
<rect x="411.8" y="84.1" width="5.0" height="1.7" fill="#011"/>
<rect x="187.9" y="99.7" width="5.3" height="1.1" fill="#022"/>
<rect x="179.4" y="81.5" width="3.1" height="1.7" fill="#011"/>
<rect x="339.4" y="84.9" width="2.4" height="1.4" fill="#022"/>
<rect x="84.6" y="79.9" width="3.9" height="1.4" fill="#021"/>
<rect x="298.0" y="80.1" width="5.0" height="1.8" fill="#032"/>
<rect x="207.6" y="80.1" width="3.2" height="1.7" fill="#011"/>
<rect x="384.7" y="99.9" width="4.0" height="2.2" fill="#021"/>
<rect x="254.1" y="87.2" width="4.0" height="1.8" fill="#032"/>
<rect x="482.2" y="85.0" width="6.0" height="2.0" fill="#011"/>
<rect x="56.1" y="87.2" width="5.5" height="1.3" fill="#021"/>
<rect x="52.6" y="90.3" width="5.4" height="2.0" fill="#032"/>
<rect x="74.3" y="101.7" width="3.5" height="1.1" fill="#021"/>
<rect x="402.9" y="80.9" width="2.4" height="2.5" fill="#032"/>
<rect x="289.9" y="91.9" width="4.7" height="1.6" fill="#021"/>
<rect x="483.3" y="99.2" width="5.0" height="1.6" fill="#011"/>
<rect x="206.8" y="91.2" width="5.1" height="1.8" fill="#021"/>
<g stroke="#fff" stroke-width="1">
<path d="M1.2 1V4"/>
<path d="M25.6 1V4"/>
<path d="M50.1 1V4"/>
<path d="M74.5 1V4"/>
<path d="M99.0 1V4"/>
<path d="M123.4 1V4"/>
<path d="M147.9 1V4"/>
<path d="M172.3 1V4"/>
<path d="M196.8 1V4"/>
<path d="M221.2 1V4"/>
<path d="M245.6 1V4"/>
<path d="M270.1 1V4"/>
<path d="M294.5 1V4"/>
<path d="M319.0 1V4"/>
<path d="M343.5 1V4"/>
<path d="M367.9 1V4"/>
<path d="M392.4 1V4"/>
<path d="M416.8 1V4"/>
<path d="M441.2 1V4"/>
<path d="M465.7 1V4"/>
<path d="M25.6 15V19"/>
<path d="M147.9 15V19"/>
<path d="M270.1 15V19"/>
<path d="M392.4 15V19"/>
</g><g font-family="Liberation Sans" font-size="11" fill="#fff">
<text x="2" y="13.5">SYNC0</text>
<text x="147.9" y="14" text-anchor="middle">1500</text>
<text x="270.1" y="14" text-anchor="middle">2000</text>
<text x="392.4" y="14" text-anchor="middle">2500</text>
</g><g filter="url(#bl)">
<rect x="143" y="22" width="44" height="53" rx="3" fill="#034848"/>
<rect x="147" y="22" width="36" height="53" rx="2" fill="#0a8a8a"/>
<rect x="151" y="22" width="29" height="53" fill="#10dada"/>
<rect x="157" y="22" width="18" height="53" fill="#f0e010"/>
<path d="M161.0,22.0 L162.0,25.0 L161.1,28.0 L160.0,31.0 L160.7,34.0 L161.9,37.0 L161.4,40.0 L160.1,43.0 L160.5,46.0 L161.8,49.0 L161.7,52.0 L160.3,55.0 L160.2,58.0 L161.6,61.0 L161.8,64.0 L160.5,67.0 L160.1,70.0 L161.4,73.0 L171.3,75.0 L170.1,72.0 L170.3,69.0 L171.6,66.0 L171.9,63.0 L170.8,60.0 L170.0,57.0 L170.7,54.0 L171.9,51.0 L171.6,48.0 L170.4,45.0 L170.1,42.0 L171.2,39.0 L172.0,36.0 L171.2,33.0 L170.1,30.0 L170.4,27.0 L171.6,24.0Z" fill="#f01010"/></g>
<path d="M161,14 L169,14 L165,20Z" fill="#40c0c0" stroke="#e02020" stroke-width="0.8"/>
<g filter="url(#bl)">
<rect x="4" y="76" width="13" height="27" fill="#00c8c8"/>
<rect x="162" y="86" width="9" height="18" fill="#10c8c8"/>
<rect x="245" y="77" width="14" height="26" fill="#00d8d8"/>
<rect x="249" y="77" width="5" height="26" fill="#60e080"/>
<rect x="484" y="77" width="5" height="16" fill="#00a0a0"/>
</g></svg>

<!-- QSO row -->
<div class="a" style="left:10px;top:619px;width:824px;height:1px;background:#aca899"></div>
<div class="a" style="left:10px;top:620px;width:824px;height:1px;background:#fff"></div>
<div class="btn" style="left:10px;top:622px;width:36px;height:22px;padding-top:5px;font-size:12px">QSO</div>
<div class="btn" style="left:46px;top:622px;width:37px;height:22px;padding-top:5px;font-size:12px">Data</div>
<div class="btn" style="left:83px;top:622px;width:36px;height:22px;padding-top:5px;font-size:12px">Find</div>
<div class="btn" style="left:120px;top:622px;width:37px;height:22px;padding-top:5px;font-size:12px">Clear</div>
<div class="t" style="left:162px;top:629px;font-size:12px">Call</div>
<div class="tb" style="left:188px;top:624px;width:88px;height:22px;padding:5px 0 0 1px;font-size:12px">OM7OM</div>
<div class="btn" style="left:276px;top:623px;width:16px;height:24px;padding-top:7px;font-size:12px">...</div>
<div class="t" style="left:297px;top:629px;font-size:12px">Name</div>
<div class="tb" style="left:332px;top:624px;width:76px;height:22px"></div>
<div class="t" style="left:413px;top:629px;font-size:12px">His</div>
<div class="tb" style="left:434px;top:624px;width:70px;height:21px;padding:5px 0 0 1px;font-size:12px">599</div>
<div class="dd" style="left:486px;top:626px;width:17px;height:18px"></div>
<div class="t" style="left:509px;top:629px;font-size:12px">My</div>
<div class="tb" style="left:528px;top:624px;width:71px;height:21px"></div>
<div class="dd" style="left:581px;top:626px;width:17px;height:18px"></div>
<div class="tb" style="left:602px;top:624px;width:78px;height:21px;padding:5px 0 0 3px;font-size:12px">14</div>
<div class="dd" style="left:662px;top:626px;width:17px;height:18px"></div>
<div class="btn" style="left:682px;top:622px;width:37px;height:22px;padding-top:5px;font-size:12px">List</div>

<div class="t" style="left:15px;top:654px;font-size:12px">QTH</div>
<div class="tb" style="left:43px;top:649px;width:145px;height:23px"></div>
<div class="t" style="left:196px;top:654px;font-size:12px">Note</div>
<div class="tb" style="left:226px;top:649px;width:228px;height:23px"></div>
<div class="t" style="left:459px;top:654px;font-size:12px">QSL</div>
<div class="tb" style="left:486px;top:649px;width:232px;height:23px"></div>
<div class="a" style="left:10px;top:672px;width:824px;height:1px;background:#716F64"></div>

<!-- RX text -->
<div class="a" style="left:10px;top:673px;width:824px;height:192px;background:#fff"></div>
<div class="t" style="left:12px;top:678px;font-size:20px;color:#107a10;transform:scaleX(1.1);transform-origin:0 0">t0ett</div>
<div class="t" style="left:12px;top:702px;font-size:20px;color:#d81010;transform:scaleX(1.04);transform-origin:0 0">[TX 2009/3/26 10:52:45]</div>
<div class="t" style="left:23px;top:726px;font-size:20px;color:#0000c0;transform:scaleX(0.945);transform-origin:0 0">OM7OM OM7OM&nbsp; de RV9AT RV9AT pse K.__</div>
<div class="a" style="left:815px;top:674px;width:17px;height:191px;background:#f4f3ee"></div>
<div class="btn" style="left:815px;top:674px;width:17px;height:19px"></div>
<div class="btn" style="left:815px;top:847px;width:17px;height:18px"></div>
<svg class="a" style="left:815px;top:674px" width="17" height="191"><path d="M5 11L8.5 7L12 11Z M5 179L8.5 183L12 179Z" fill="#aca899"/></svg>
<div class="a" style="left:10px;top:865px;width:824px;height:8px;background:#ECE9D8;border-top:1px solid #aca899;border-bottom:1px solid #716F64"></div>

<!-- TX text -->
<div class="a" style="left:10px;top:873px;width:824px;height:82px;background:#fff"></div>
<div class="t" style="left:23px;top:878px;font-size:20px;color:#0000c0;transform:scaleX(0.945);transform-origin:0 0">OM7OM OM7OM&nbsp; de RV9AT RV9AT pse K.</div>
<div class="a" style="left:12px;top:899px;width:2px;height:23px;background:#000"></div>
<div class="a" style="left:815px;top:874px;width:17px;height:81px;background:#f4f3ee"></div>
<div class="btn" style="left:815px;top:874px;width:17px;height:19px"></div>
<div class="btn" style="left:815px;top:936px;width:17px;height:18px"></div>
<svg class="a" style="left:815px;top:874px" width="17" height="81"><path d="M5 11L8.5 7L12 11Z M5 69L8.5 73L12 69Z" fill="#aca899"/></svg>
<svg class="a" style="left:820px;top:994px" width="14" height="14"><path d="M12 2L2 12M12 6L6 12M12 10L10 12" stroke="#aca899" stroke-width="1.2"/></svg>

<!-- macros -->
<div class="btn" style="left:10px;top:957px;width:66px;height:17px;padding-top:3px;font-size:12px;font-weight:bold;color:#1010c0">CQ-1</div>
<div class="btn" style="left:10px;top:974px;width:66px;height:16px"></div>
<div class="btn" style="left:76px;top:957px;width:65px;height:17px;padding-top:3px;font-size:12px;font-weight:bold;color:#e01010">CALLING</div>
<div class="btn" style="left:76px;top:974px;width:65px;height:16px"></div>
<div class="btn" style="left:141px;top:957px;width:65px;height:17px;padding-top:3px;font-size:12px;font-weight:bold;color:#1010c0">RIPORT</div>
<div class="btn" style="left:141px;top:974px;width:65px;height:16px"></div>
<div class="btn" style="left:206px;top:957px;width:66px;height:17px;padding-top:3px;font-size:12px;font-weight:bold;color:#000">INFO</div>
<div class="btn" style="left:206px;top:974px;width:66px;height:16px"></div>
<div class="btn" style="left:280px;top:957px;width:66px;height:17px;padding-top:3px;font-size:12px;font-weight:bold;color:#e01010">73</div>
<div class="btn" style="left:280px;top:974px;width:66px;height:16px"></div>
<div class="btn" style="left:346px;top:957px;width:65px;height:17px;padding-top:3px;font-size:12px;font-weight:bold;color:#000">ЧИСТИТЬ</div>
<div class="btn" style="left:346px;top:974px;width:65px;height:16px"></div>
<div class="btn" style="left:411px;top:957px;width:65px;height:17px;padding-top:3px;font-size:12px;font-weight:bold;color:#900000">PSE&nbsp; SSTV</div>
<div class="btn" style="left:411px;top:974px;width:65px;height:16px"></div>
<div class="btn" style="left:476px;top:957px;width:66px;height:17px;padding-top:3px;font-size:12px;font-weight:bold;color:#1010c0">CQ-2</div>
<div class="btn" style="left:476px;top:974px;width:66px;height:16px"></div>
<div class="btn" style="left:552px;top:957px;width:66px;height:17px;padding-top:3px;font-size:12px;font-weight:bold;color:#e01010">ВЫЗОВ</div>
<div class="btn" style="left:552px;top:974px;width:66px;height:16px"></div>
<div class="btn" style="left:618px;top:957px;width:65px;height:17px;padding-top:3px;font-size:12px;font-weight:bold;color:#1010c0">РАПОРТ</div>
<div class="btn" style="left:618px;top:974px;width:65px;height:16px"></div>
<div class="btn" style="left:683px;top:957px;width:65px;height:17px;padding-top:3px;font-size:12px;font-weight:bold;color:#e01010">73</div>
<div class="btn" style="left:683px;top:974px;width:65px;height:16px"></div>
<div class="btn" style="left:748px;top:957px;width:66px;height:17px;padding-top:3px;font-size:12px;font-weight:bold;color:#e01010">73 МИНИ</div>
<div class="btn" style="left:748px;top:974px;width:66px;height:16px"></div>
<div class="btn" style="left:817px;top:958px;width:16px;height:16px"></div><div class="btn" style="left:817px;top:974px;width:16px;height:16px"></div>
<svg class="a" style="left:817px;top:958px" width="16" height="32"><path d="M4 10L8 6L12 10Z M4 21L8 25L12 21Z" fill="#000"/></svg>

<!-- status -->
<div class="a" style="left:10px;top:992px;width:40px;height:16px;border:1px solid;border-color:#aca899 #fff #fff #aca899;padding:2px 0 0 1px;font-size:13px;line-height:1;white-space:nowrap;overflow:hidden">Page1</div>
<div class="a" style="left:51px;top:992px;width:66px;height:16px;border:1px solid;border-color:#aca899 #fff #fff #aca899;padding:2px 0 0 1px;font-size:13px;line-height:1;white-space:nowrap;overflow:hidden">S/N=95dB</div>
<div class="a" style="left:121px;top:992px;width:106px;height:16px;border:1px solid;border-color:#aca899 #fff #fff #aca899;padding:2px 0 0 1px;font-size:13px;line-height:1;white-space:nowrap;overflow:hidden">11077.72/-49.88</div>
<div class="a" style="left:231px;top:992px;width:46px;height:16px;border:1px solid;border-color:#aca899 #fff #fff #aca899;padding:2px 0 0 1px;font-size:13px;line-height:1;white-space:nowrap;overflow:hidden">NONE</div>
<div class="a" style="left:281px;top:992px;width:38px;height:16px;border:1px solid;border-color:#aca899 #fff #fff #aca899;padding:2px 0 0 1px;font-size:13px;line-height:1;white-space:nowrap;overflow:hidden">Other</div>
<div class="a" style="left:322px;top:992px;width:512px;height:16px;border:1px solid;border-color:#aca899 #fff #fff #aca899;padding:2px 0 0 1px;font-size:13px;line-height:1;white-space:nowrap;overflow:hidden"></div>

</body></html>
